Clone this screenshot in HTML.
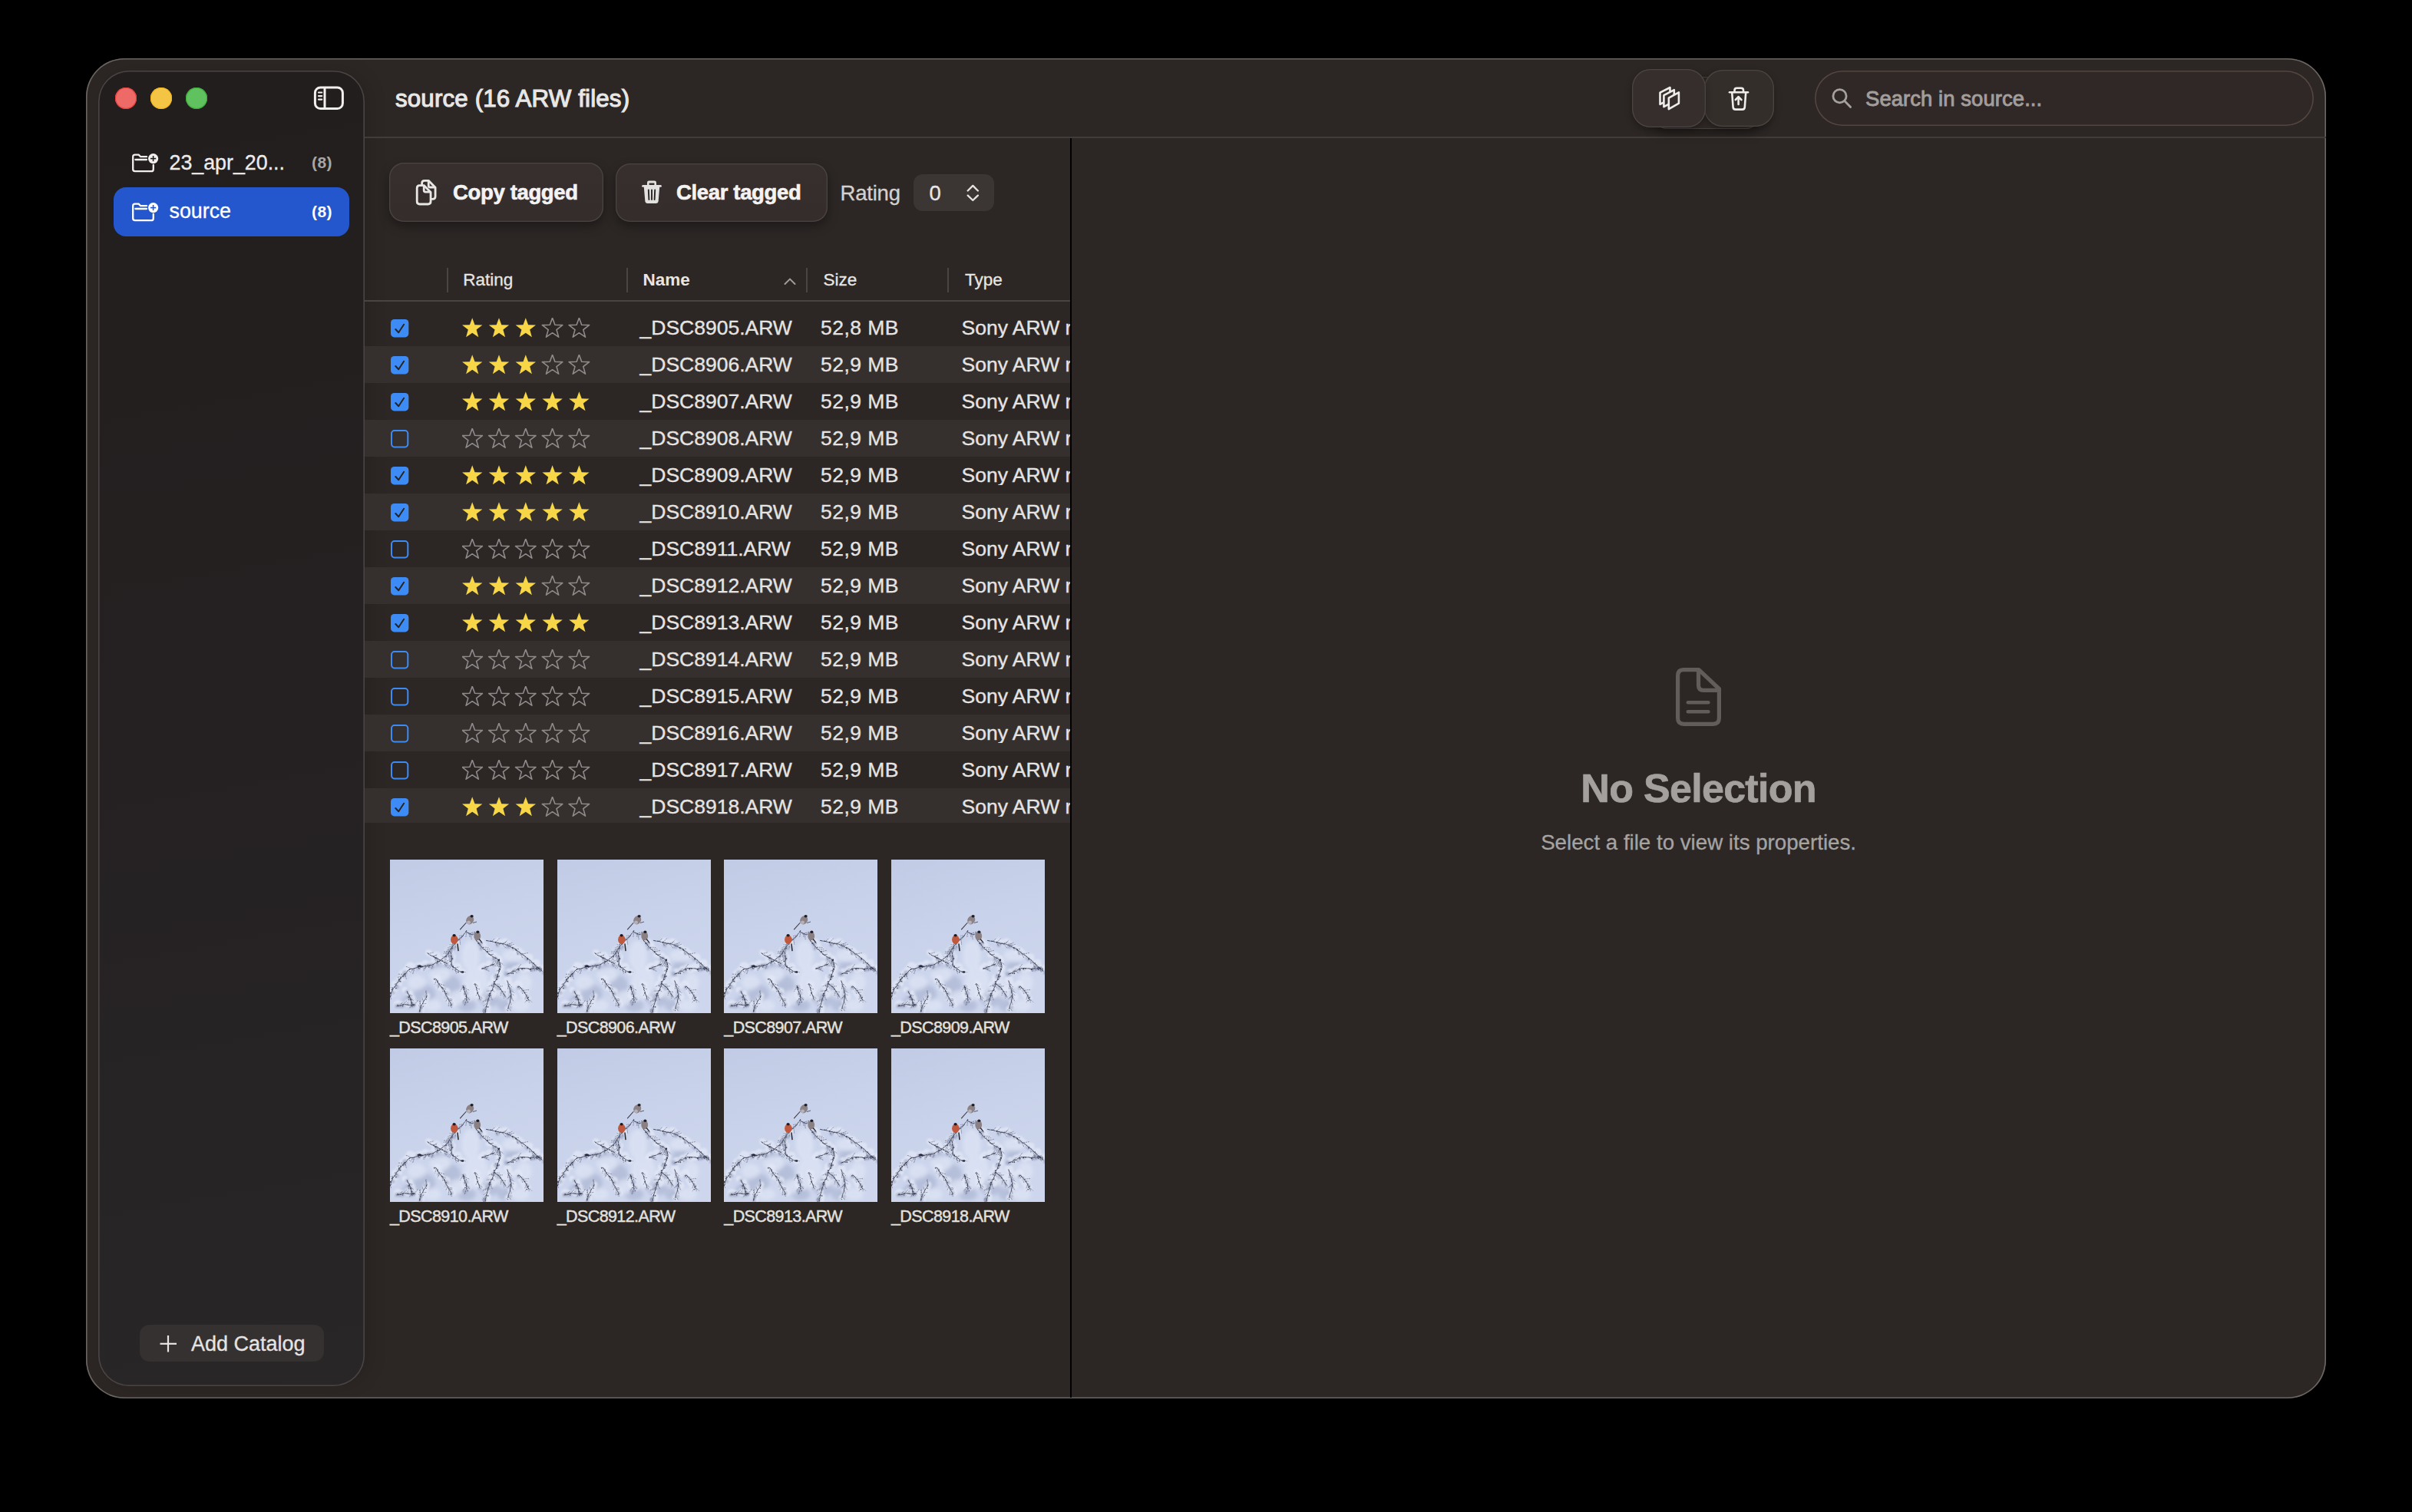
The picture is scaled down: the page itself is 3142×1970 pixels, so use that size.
<!DOCTYPE html>
<html><head><meta charset="utf-8"><title>source</title>
<style>
html,body{margin:0;padding:0;background:#000;}
body{width:3142px;height:1970px;overflow:hidden;position:relative;font-family:"Liberation Sans", sans-serif;}
.b{position:absolute;}
.t{position:absolute;white-space:nowrap;line-height:1;font-family:"Liberation Sans", sans-serif;}
</style></head><body>
<div class="b" style="left:112px;top:76px;width:2918px;height:1746px;background:#2c2725;border-radius:50px;box-shadow:inset 0 0 0 1.6px #6c6663;"></div>
<div class="b" style="left:128px;top:92px;width:347.1px;height:1714px;background:linear-gradient(170deg,#221e1d 0%,#252122 50%,#282627 100%);border-radius:40px;box-shadow:inset 0 0 0 1.6px #4b4445, 6px 0 24px rgba(0,0,0,0.12);"></div>
<div class="b" style="left:150px;top:114px;width:28px;height:28px;background:#ee6a67;border-radius:50%;box-shadow:inset 0 0 0 1.1px #e8403c;"></div>
<div class="b" style="left:196px;top:114px;width:28px;height:28px;background:#f4c545;border-radius:50%;box-shadow:inset 0 0 0 1.1px #f0b61c;"></div>
<div class="b" style="left:242px;top:114px;width:28px;height:28px;background:#60c25f;border-radius:50%;box-shadow:inset 0 0 0 1.1px #3eaa3c;"></div>
<svg class="b" style="left:405px;top:108px" width="48" height="40" viewBox="0 0 48 40"><g fill="none" stroke="#f2f0ef" stroke-width="3"><rect x="5.4" y="5.9" width="36" height="27.7" rx="7"/><line x1="18" y1="6" x2="18" y2="33.5"/></g><g stroke="#f2f0ef" stroke-width="2.2" stroke-linecap="round"><line x1="10" y1="12.5" x2="14.2" y2="12.5"/><line x1="10" y1="17.1" x2="14.2" y2="17.1"/><line x1="10" y1="21.6" x2="14.2" y2="21.6"/></g></svg>
<svg class="b" style="left:170px;top:198px" width="40" height="30" viewBox="0 0 40 30"><g fill="none" stroke="#f2f0ef" stroke-width="2.3" stroke-linejoin="round" stroke-linecap="round"><path d="M21 6.2 H13.2 L10.6 3.6 H5.8 Q3.2 3.6 3.2 6.2 V22.6 Q3.2 25.2 5.8 25.2 H27 Q29.8 25.2 29.8 22.4 V16.8"/><line x1="6.4" y1="10" x2="21" y2="10"/></g><circle cx="29.6" cy="8.6" r="6.6" fill="#f2f0ef"/><g stroke="#221e1d" stroke-width="1.6"><line x1="29.6" y1="5" x2="29.6" y2="12.2"/><line x1="26" y1="8.6" x2="33.2" y2="8.6"/></g></svg>
<div class="t" style="left:220.50px;top:198.61px;font-size:26.8px;font-weight:400;color:#eeeceb;letter-spacing:0px;-webkit-text-stroke:0.3px #eeeceb;">23_apr_20...</div>
<div class="t" style="left:406.00px;top:201.02px;font-size:21px;font-weight:700;color:#a9a6a5;letter-spacing:0.4px;">(8)</div>
<div class="b" style="left:148px;top:244px;width:307px;height:64px;background:#2457cd;border-radius:16px;"></div>
<svg class="b" style="left:170px;top:262px" width="40" height="30" viewBox="0 0 40 30"><g fill="none" stroke="#ffffff" stroke-width="2.3" stroke-linejoin="round" stroke-linecap="round"><path d="M21 6.2 H13.2 L10.6 3.6 H5.8 Q3.2 3.6 3.2 6.2 V22.6 Q3.2 25.2 5.8 25.2 H27 Q29.8 25.2 29.8 22.4 V16.8"/><line x1="6.4" y1="10" x2="21" y2="10"/></g><circle cx="29.6" cy="8.6" r="6.6" fill="#ffffff"/><g stroke="#2457cd" stroke-width="1.6"><line x1="29.6" y1="5" x2="29.6" y2="12.2"/><line x1="26" y1="8.6" x2="33.2" y2="8.6"/></g></svg>
<div class="t" style="left:220.50px;top:261.61px;font-size:26.8px;font-weight:400;color:#ffffff;letter-spacing:0px;-webkit-text-stroke:0.3px #ffffff;">source</div>
<div class="t" style="left:406.00px;top:264.52px;font-size:21px;font-weight:700;color:#ffffff;letter-spacing:0.4px;">(8)</div>
<div class="b" style="left:182px;top:1726px;width:240px;height:48px;background:#353130;border-radius:13px;"></div>
<svg class="b" style="left:206px;top:1738px" width="26" height="26" viewBox="0 0 26 26"><g stroke="#e8e5e3" stroke-width="2.2"><line x1="13" y1="2" x2="13" y2="23.5"/><line x1="2.5" y1="12.8" x2="24" y2="12.8"/></g></svg>
<div class="t" style="left:249.00px;top:1737.54px;font-size:27px;font-weight:400;color:#e6e3e1;letter-spacing:0px;-webkit-text-stroke:0.3px #e6e3e1;">Add Catalog</div>
<div class="b" style="left:475px;top:178px;width:2555px;height:2px;background:#413c3a;"></div>
<div class="t" style="left:515.00px;top:112.70px;font-size:31.3px;font-weight:400;color:#e9e7e5;letter-spacing:0.15px;-webkit-text-stroke:1.1px #e9e7e5;">source (16 ARW files)</div>
<div class="b" style="left:2152px;top:100px;width:142px;height:68px;background:#2f2927;border-radius:20px;box-shadow:0 6px 14px rgba(0,0,0,0.35), inset 0 0 0 1px #4a3f3b;"></div>
<div class="b" style="left:2220px;top:91px;width:91px;height:74px;background:#342e2b;border-radius:24px;box-shadow:0 4px 10px rgba(0,0,0,0.3), inset 0 0 0 1.3px #4c4441;"></div>
<div class="b" style="left:2126px;top:90px;width:96px;height:76px;background:#362e2c;border-radius:24px;box-shadow:0 4px 10px rgba(0,0,0,0.3), inset 0 0 0 1.3px #4c4441;"></div>
<svg class="b" style="left:2155px;top:108px" width="40" height="40" viewBox="0 0 40 40"><g fill="#362e2c" stroke="#efedeb" stroke-width="2.6" stroke-linejoin="round"><path d="M7.5 12.7 L20.5 6 V21 L7.5 27.8 Z"/><path d="M12.4 16.2 L25.8 9.2 V24 L12.4 31.2 Z"/><path d="M18.8 19.6 L31.9 12.4 V26.6 L18.8 34.1 Z"/></g></svg>
<svg class="b" style="left:2248px;top:110px" width="34" height="36" viewBox="0 0 34 36"><g fill="none" stroke="#efedeb" stroke-width="2.6" stroke-linejoin="round" stroke-linecap="round"><line x1="5" y1="10.2" x2="29" y2="10.2"/><path d="M11.5 10 V7.6 Q11.5 4.8 14.3 4.8 H20.2 Q23 4.8 23 7.6 V10"/><path d="M8.2 10.5 L9.6 29.6 Q9.8 32.6 12.8 32.6 H21.6 Q24.6 32.6 24.8 29.6 L26.2 10.5"/><line x1="16.6" y1="26" x2="16.6" y2="16.5"/><path d="M12.8 20 L16.6 16.2 L20.4 20"/></g></svg>
<div class="b" style="left:2364px;top:92px;width:650px;height:72px;background:#302826;border-radius:36px;box-shadow:inset 0 0 0 1.6px #54463f;"></div>
<svg class="b" style="left:2382px;top:111px" width="36" height="36" viewBox="0 0 36 36"><g fill="none" stroke="#a5a19f" stroke-width="2.8" stroke-linecap="round"><circle cx="14.5" cy="14.2" r="8.6"/><line x1="20.8" y1="20.6" x2="28.6" y2="28.6"/></g></svg>
<div class="t" style="left:2430.00px;top:114.72px;font-size:27.5px;font-weight:400;color:#a29e9c;letter-spacing:0.05px;-webkit-text-stroke:0.9px #a29e9c;">Search in source...</div>
<div class="b" style="left:507px;top:212px;width:279px;height:77px;background:linear-gradient(180deg,#372f2d,#342d2b);border-radius:19px;box-shadow:0 6px 14px rgba(0,0,0,0.35), inset 0 0 0 1.3px #4b4341;"></div>
<svg class="b" style="left:537px;top:229.5px" width="36" height="40" viewBox="0 0 36 40"><g fill="none" stroke="#e9e7e5" stroke-width="3" stroke-linejoin="round" transform="translate(1.5,1.2) scale(0.94)"><path d="M11.8 10.6 V8 Q11.8 4.4 15.4 4.4 H21 L30.4 14 V26.4 Q30.4 30 26.8 30 H25"/><path d="M21 4.6 V11.4 Q21 13.6 23.2 13.6 H30.2"/><path d="M8.6 11 H14.6 L24 20.6 V33.4 Q24 37 20.4 37 H8.6 Q5 37 5 33.4 V14.6 Q5 11 8.6 11 Z" fill="#352e2c"/><path d="M14.6 11.2 V18 Q14.6 20.2 16.8 20.2 H23.8"/></g></svg>
<div class="t" style="left:590.00px;top:236.72px;font-size:27.5px;font-weight:700;color:#f5f3f2;letter-spacing:-0.35px;-webkit-text-stroke:0.6px #f5f3f2;">Copy tagged</div>
<div class="b" style="left:802px;top:213px;width:276px;height:75.5px;background:linear-gradient(180deg,#372f2d,#342d2b);border-radius:19px;box-shadow:0 6px 14px rgba(0,0,0,0.35), inset 0 0 0 1.3px #4b4341;"></div>
<svg class="b" style="left:832px;top:232px" width="34" height="36" viewBox="0 0 34 36"><path fill="#e3e1e0" d="M13.4 3.6 H20.6 Q23 3.6 23 6 V9 H28.4 Q30 9.2 30 10.4 Q30 11.6 28.4 11.8 H27.2 L25.6 30.6 Q25.3 33 22.8 33 H11.2 Q8.7 33 8.4 30.6 L6.8 11.8 H5.6 Q4 11.6 4 10.4 Q4 9.2 5.6 9 H11 V6 Q11 3.6 13.4 3.6 Z M13.6 6.4 V9 H20.4 V6.4 Z"/><g stroke="#2a2422" stroke-width="1.9" stroke-linecap="round"><line x1="12.8" y1="15.5" x2="13.4" y2="28"/><line x1="17" y1="15.5" x2="17" y2="28"/><line x1="21.2" y1="15.5" x2="20.6" y2="28"/></g></svg>
<div class="t" style="left:881.00px;top:236.72px;font-size:27.5px;font-weight:700;color:#f5f3f2;letter-spacing:-0.35px;-webkit-text-stroke:0.6px #f5f3f2;">Clear tagged</div>
<div class="t" style="left:1094.50px;top:238.22px;font-size:27.5px;font-weight:400;color:#d4d0ce;letter-spacing:-0.2px;-webkit-text-stroke:0.3px #d4d0ce;">Rating</div>
<div class="b" style="left:1190px;top:227px;width:105px;height:48px;background:#3b3633;border-radius:12px;"></div>
<div class="t" style="left:1210.50px;top:238.22px;font-size:27.5px;font-weight:400;color:#e9e7e5;letter-spacing:0px;-webkit-text-stroke:0.3px #e9e7e5;">0</div>
<svg class="b" style="left:1254px;top:236px" width="26" height="32" viewBox="0 0 26 32"><g fill="none" stroke="#e6e4e2" stroke-width="2.3" stroke-linecap="round" stroke-linejoin="round"><path d="M6.7 12.5 L13.3 5.9 L19.9 12.5"/><path d="M6.7 18.6 L13.3 25 L19.9 18.6"/></g></svg>
<div class="b" style="left:582px;top:349px;width:2px;height:32px;background:#4a4543;"></div>
<div class="b" style="left:816px;top:349px;width:2px;height:32px;background:#4a4543;"></div>
<div class="b" style="left:1050px;top:349px;width:2px;height:32px;background:#4a4543;"></div>
<div class="b" style="left:1234px;top:349px;width:2px;height:32px;background:#4a4543;"></div>
<div class="t" style="left:603.30px;top:354.25px;font-size:22.5px;font-weight:400;color:#e8e5e3;letter-spacing:0px;-webkit-text-stroke:0.3px #e8e5e3;">Rating</div>
<div class="t" style="left:837.60px;top:354.25px;font-size:22.5px;font-weight:700;color:#e8e5e3;letter-spacing:0px;">Name</div>
<svg class="b" style="left:1018px;top:355px" width="22" height="20" viewBox="0 0 22 20"><path d="M4.5 15 L11 8.6 L17.5 15" fill="none" stroke="#a19d9b" stroke-width="2" stroke-linecap="round"/></svg>
<div class="t" style="left:1072.50px;top:354.25px;font-size:22.5px;font-weight:400;color:#e8e5e3;letter-spacing:0px;-webkit-text-stroke:0.3px #e8e5e3;">Size</div>
<div class="t" style="left:1257.00px;top:354.25px;font-size:22.5px;font-weight:400;color:#e8e5e3;letter-spacing:0px;-webkit-text-stroke:0.3px #e8e5e3;">Type</div>
<div class="b" style="left:475px;top:391px;width:919px;height:2px;background:#4a4543;"></div>
<svg class="b" style="left:509px;top:415.50px" width="24" height="24" viewBox="0 0 24 24"><rect x="0" y="0" width="23.3" height="23.4" rx="4.6" fill="#3d8bf5"/><path d="M6.3 13 L10.2 17.2 L17.1 6.8" fill="none" stroke="#2a2320" stroke-width="2" stroke-linecap="round" stroke-linejoin="round"/></svg>
<svg class="b" style="left:601.5px;top:414.30px" width="170" height="26" viewBox="0 0 170 26"><path transform="translate(0.00,0)" d="M13.2 0.2 L16.5 9.3 L26.4 9.6 L18.6 15.6 L21.3 25.2 L13.2 19.7 L5.1 25.2 L7.8 15.6 L0 9.6 L9.9 9.3 Z" fill="#f7d647"/><path transform="translate(34.80,0)" d="M13.2 0.2 L16.5 9.3 L26.4 9.6 L18.6 15.6 L21.3 25.2 L13.2 19.7 L5.1 25.2 L7.8 15.6 L0 9.6 L9.9 9.3 Z" fill="#f7d647"/><path transform="translate(69.60,0)" d="M13.2 0.2 L16.5 9.3 L26.4 9.6 L18.6 15.6 L21.3 25.2 L13.2 19.7 L5.1 25.2 L7.8 15.6 L0 9.6 L9.9 9.3 Z" fill="#f7d647"/><path transform="translate(104.40,0)" d="M13.2 0.2 L16.5 9.3 L26.4 9.6 L18.6 15.6 L21.3 25.2 L13.2 19.7 L5.1 25.2 L7.8 15.6 L0 9.6 L9.9 9.3 Z" fill="none" stroke="#8f8b8c" stroke-width="1.6" stroke-linejoin="round"/><path transform="translate(139.20,0)" d="M13.2 0.2 L16.5 9.3 L26.4 9.6 L18.6 15.6 L21.3 25.2 L13.2 19.7 L5.1 25.2 L7.8 15.6 L0 9.6 L9.9 9.3 Z" fill="none" stroke="#8f8b8c" stroke-width="1.6" stroke-linejoin="round"/></svg>
<div class="t" style="left:833.50px;top:413.97px;font-size:26.5px;font-weight:400;color:#e6e3e1;letter-spacing:0px;-webkit-text-stroke:0.35px #e6e3e1;">_DSC8905.ARW</div>
<div class="t" style="left:1069.00px;top:413.97px;font-size:26.5px;font-weight:400;color:#e6e3e1;letter-spacing:0.45px;-webkit-text-stroke:0.35px #e6e3e1;">52,8 MB</div>
<div class="t" style="left:1252.5px;top:413.97px;font-size:26.5px;color:#e6e3e1;width:141px;overflow:hidden;-webkit-text-stroke:0.35px #e6e3e1;">Sony ARW raw image</div>
<div class="b" style="left:475px;top:451.20px;width:919px;height:48.00px;background:#35302d;"></div>
<svg class="b" style="left:509px;top:463.50px" width="24" height="24" viewBox="0 0 24 24"><rect x="0" y="0" width="23.3" height="23.4" rx="4.6" fill="#3d8bf5"/><path d="M6.3 13 L10.2 17.2 L17.1 6.8" fill="none" stroke="#2a2320" stroke-width="2" stroke-linecap="round" stroke-linejoin="round"/></svg>
<svg class="b" style="left:601.5px;top:462.30px" width="170" height="26" viewBox="0 0 170 26"><path transform="translate(0.00,0)" d="M13.2 0.2 L16.5 9.3 L26.4 9.6 L18.6 15.6 L21.3 25.2 L13.2 19.7 L5.1 25.2 L7.8 15.6 L0 9.6 L9.9 9.3 Z" fill="#f7d647"/><path transform="translate(34.80,0)" d="M13.2 0.2 L16.5 9.3 L26.4 9.6 L18.6 15.6 L21.3 25.2 L13.2 19.7 L5.1 25.2 L7.8 15.6 L0 9.6 L9.9 9.3 Z" fill="#f7d647"/><path transform="translate(69.60,0)" d="M13.2 0.2 L16.5 9.3 L26.4 9.6 L18.6 15.6 L21.3 25.2 L13.2 19.7 L5.1 25.2 L7.8 15.6 L0 9.6 L9.9 9.3 Z" fill="#f7d647"/><path transform="translate(104.40,0)" d="M13.2 0.2 L16.5 9.3 L26.4 9.6 L18.6 15.6 L21.3 25.2 L13.2 19.7 L5.1 25.2 L7.8 15.6 L0 9.6 L9.9 9.3 Z" fill="none" stroke="#8f8b8c" stroke-width="1.6" stroke-linejoin="round"/><path transform="translate(139.20,0)" d="M13.2 0.2 L16.5 9.3 L26.4 9.6 L18.6 15.6 L21.3 25.2 L13.2 19.7 L5.1 25.2 L7.8 15.6 L0 9.6 L9.9 9.3 Z" fill="none" stroke="#8f8b8c" stroke-width="1.6" stroke-linejoin="round"/></svg>
<div class="t" style="left:833.50px;top:461.97px;font-size:26.5px;font-weight:400;color:#e6e3e1;letter-spacing:0px;-webkit-text-stroke:0.35px #e6e3e1;">_DSC8906.ARW</div>
<div class="t" style="left:1069.00px;top:461.97px;font-size:26.5px;font-weight:400;color:#e6e3e1;letter-spacing:0.45px;-webkit-text-stroke:0.35px #e6e3e1;">52,9 MB</div>
<div class="t" style="left:1252.5px;top:461.97px;font-size:26.5px;color:#e6e3e1;width:141px;overflow:hidden;-webkit-text-stroke:0.35px #e6e3e1;">Sony ARW raw image</div>
<svg class="b" style="left:509px;top:511.50px" width="24" height="24" viewBox="0 0 24 24"><rect x="0" y="0" width="23.3" height="23.4" rx="4.6" fill="#3d8bf5"/><path d="M6.3 13 L10.2 17.2 L17.1 6.8" fill="none" stroke="#2a2320" stroke-width="2" stroke-linecap="round" stroke-linejoin="round"/></svg>
<svg class="b" style="left:601.5px;top:510.30px" width="170" height="26" viewBox="0 0 170 26"><path transform="translate(0.00,0)" d="M13.2 0.2 L16.5 9.3 L26.4 9.6 L18.6 15.6 L21.3 25.2 L13.2 19.7 L5.1 25.2 L7.8 15.6 L0 9.6 L9.9 9.3 Z" fill="#f7d647"/><path transform="translate(34.80,0)" d="M13.2 0.2 L16.5 9.3 L26.4 9.6 L18.6 15.6 L21.3 25.2 L13.2 19.7 L5.1 25.2 L7.8 15.6 L0 9.6 L9.9 9.3 Z" fill="#f7d647"/><path transform="translate(69.60,0)" d="M13.2 0.2 L16.5 9.3 L26.4 9.6 L18.6 15.6 L21.3 25.2 L13.2 19.7 L5.1 25.2 L7.8 15.6 L0 9.6 L9.9 9.3 Z" fill="#f7d647"/><path transform="translate(104.40,0)" d="M13.2 0.2 L16.5 9.3 L26.4 9.6 L18.6 15.6 L21.3 25.2 L13.2 19.7 L5.1 25.2 L7.8 15.6 L0 9.6 L9.9 9.3 Z" fill="#f7d647"/><path transform="translate(139.20,0)" d="M13.2 0.2 L16.5 9.3 L26.4 9.6 L18.6 15.6 L21.3 25.2 L13.2 19.7 L5.1 25.2 L7.8 15.6 L0 9.6 L9.9 9.3 Z" fill="#f7d647"/></svg>
<div class="t" style="left:833.50px;top:509.97px;font-size:26.5px;font-weight:400;color:#e6e3e1;letter-spacing:0px;-webkit-text-stroke:0.35px #e6e3e1;">_DSC8907.ARW</div>
<div class="t" style="left:1069.00px;top:509.97px;font-size:26.5px;font-weight:400;color:#e6e3e1;letter-spacing:0.45px;-webkit-text-stroke:0.35px #e6e3e1;">52,9 MB</div>
<div class="t" style="left:1252.5px;top:509.97px;font-size:26.5px;color:#e6e3e1;width:141px;overflow:hidden;-webkit-text-stroke:0.35px #e6e3e1;">Sony ARW raw image</div>
<div class="b" style="left:475px;top:547.20px;width:919px;height:48.00px;background:#35302d;"></div>
<svg class="b" style="left:509px;top:559.50px" width="24" height="24" viewBox="0 0 24 24"><rect x="1" y="1" width="21.3" height="21.4" rx="3.8" fill="none" stroke="#3d8bf5" stroke-width="2"/></svg>
<svg class="b" style="left:601.5px;top:558.30px" width="170" height="26" viewBox="0 0 170 26"><path transform="translate(0.00,0)" d="M13.2 0.2 L16.5 9.3 L26.4 9.6 L18.6 15.6 L21.3 25.2 L13.2 19.7 L5.1 25.2 L7.8 15.6 L0 9.6 L9.9 9.3 Z" fill="none" stroke="#8f8b8c" stroke-width="1.6" stroke-linejoin="round"/><path transform="translate(34.80,0)" d="M13.2 0.2 L16.5 9.3 L26.4 9.6 L18.6 15.6 L21.3 25.2 L13.2 19.7 L5.1 25.2 L7.8 15.6 L0 9.6 L9.9 9.3 Z" fill="none" stroke="#8f8b8c" stroke-width="1.6" stroke-linejoin="round"/><path transform="translate(69.60,0)" d="M13.2 0.2 L16.5 9.3 L26.4 9.6 L18.6 15.6 L21.3 25.2 L13.2 19.7 L5.1 25.2 L7.8 15.6 L0 9.6 L9.9 9.3 Z" fill="none" stroke="#8f8b8c" stroke-width="1.6" stroke-linejoin="round"/><path transform="translate(104.40,0)" d="M13.2 0.2 L16.5 9.3 L26.4 9.6 L18.6 15.6 L21.3 25.2 L13.2 19.7 L5.1 25.2 L7.8 15.6 L0 9.6 L9.9 9.3 Z" fill="none" stroke="#8f8b8c" stroke-width="1.6" stroke-linejoin="round"/><path transform="translate(139.20,0)" d="M13.2 0.2 L16.5 9.3 L26.4 9.6 L18.6 15.6 L21.3 25.2 L13.2 19.7 L5.1 25.2 L7.8 15.6 L0 9.6 L9.9 9.3 Z" fill="none" stroke="#8f8b8c" stroke-width="1.6" stroke-linejoin="round"/></svg>
<div class="t" style="left:833.50px;top:557.97px;font-size:26.5px;font-weight:400;color:#e6e3e1;letter-spacing:0px;-webkit-text-stroke:0.35px #e6e3e1;">_DSC8908.ARW</div>
<div class="t" style="left:1069.00px;top:557.97px;font-size:26.5px;font-weight:400;color:#e6e3e1;letter-spacing:0.45px;-webkit-text-stroke:0.35px #e6e3e1;">52,9 MB</div>
<div class="t" style="left:1252.5px;top:557.97px;font-size:26.5px;color:#e6e3e1;width:141px;overflow:hidden;-webkit-text-stroke:0.35px #e6e3e1;">Sony ARW raw image</div>
<svg class="b" style="left:509px;top:607.50px" width="24" height="24" viewBox="0 0 24 24"><rect x="0" y="0" width="23.3" height="23.4" rx="4.6" fill="#3d8bf5"/><path d="M6.3 13 L10.2 17.2 L17.1 6.8" fill="none" stroke="#2a2320" stroke-width="2" stroke-linecap="round" stroke-linejoin="round"/></svg>
<svg class="b" style="left:601.5px;top:606.30px" width="170" height="26" viewBox="0 0 170 26"><path transform="translate(0.00,0)" d="M13.2 0.2 L16.5 9.3 L26.4 9.6 L18.6 15.6 L21.3 25.2 L13.2 19.7 L5.1 25.2 L7.8 15.6 L0 9.6 L9.9 9.3 Z" fill="#f7d647"/><path transform="translate(34.80,0)" d="M13.2 0.2 L16.5 9.3 L26.4 9.6 L18.6 15.6 L21.3 25.2 L13.2 19.7 L5.1 25.2 L7.8 15.6 L0 9.6 L9.9 9.3 Z" fill="#f7d647"/><path transform="translate(69.60,0)" d="M13.2 0.2 L16.5 9.3 L26.4 9.6 L18.6 15.6 L21.3 25.2 L13.2 19.7 L5.1 25.2 L7.8 15.6 L0 9.6 L9.9 9.3 Z" fill="#f7d647"/><path transform="translate(104.40,0)" d="M13.2 0.2 L16.5 9.3 L26.4 9.6 L18.6 15.6 L21.3 25.2 L13.2 19.7 L5.1 25.2 L7.8 15.6 L0 9.6 L9.9 9.3 Z" fill="#f7d647"/><path transform="translate(139.20,0)" d="M13.2 0.2 L16.5 9.3 L26.4 9.6 L18.6 15.6 L21.3 25.2 L13.2 19.7 L5.1 25.2 L7.8 15.6 L0 9.6 L9.9 9.3 Z" fill="#f7d647"/></svg>
<div class="t" style="left:833.50px;top:605.97px;font-size:26.5px;font-weight:400;color:#e6e3e1;letter-spacing:0px;-webkit-text-stroke:0.35px #e6e3e1;">_DSC8909.ARW</div>
<div class="t" style="left:1069.00px;top:605.97px;font-size:26.5px;font-weight:400;color:#e6e3e1;letter-spacing:0.45px;-webkit-text-stroke:0.35px #e6e3e1;">52,9 MB</div>
<div class="t" style="left:1252.5px;top:605.97px;font-size:26.5px;color:#e6e3e1;width:141px;overflow:hidden;-webkit-text-stroke:0.35px #e6e3e1;">Sony ARW raw image</div>
<div class="b" style="left:475px;top:643.20px;width:919px;height:48.00px;background:#35302d;"></div>
<svg class="b" style="left:509px;top:655.50px" width="24" height="24" viewBox="0 0 24 24"><rect x="0" y="0" width="23.3" height="23.4" rx="4.6" fill="#3d8bf5"/><path d="M6.3 13 L10.2 17.2 L17.1 6.8" fill="none" stroke="#2a2320" stroke-width="2" stroke-linecap="round" stroke-linejoin="round"/></svg>
<svg class="b" style="left:601.5px;top:654.30px" width="170" height="26" viewBox="0 0 170 26"><path transform="translate(0.00,0)" d="M13.2 0.2 L16.5 9.3 L26.4 9.6 L18.6 15.6 L21.3 25.2 L13.2 19.7 L5.1 25.2 L7.8 15.6 L0 9.6 L9.9 9.3 Z" fill="#f7d647"/><path transform="translate(34.80,0)" d="M13.2 0.2 L16.5 9.3 L26.4 9.6 L18.6 15.6 L21.3 25.2 L13.2 19.7 L5.1 25.2 L7.8 15.6 L0 9.6 L9.9 9.3 Z" fill="#f7d647"/><path transform="translate(69.60,0)" d="M13.2 0.2 L16.5 9.3 L26.4 9.6 L18.6 15.6 L21.3 25.2 L13.2 19.7 L5.1 25.2 L7.8 15.6 L0 9.6 L9.9 9.3 Z" fill="#f7d647"/><path transform="translate(104.40,0)" d="M13.2 0.2 L16.5 9.3 L26.4 9.6 L18.6 15.6 L21.3 25.2 L13.2 19.7 L5.1 25.2 L7.8 15.6 L0 9.6 L9.9 9.3 Z" fill="#f7d647"/><path transform="translate(139.20,0)" d="M13.2 0.2 L16.5 9.3 L26.4 9.6 L18.6 15.6 L21.3 25.2 L13.2 19.7 L5.1 25.2 L7.8 15.6 L0 9.6 L9.9 9.3 Z" fill="#f7d647"/></svg>
<div class="t" style="left:833.50px;top:653.97px;font-size:26.5px;font-weight:400;color:#e6e3e1;letter-spacing:0px;-webkit-text-stroke:0.35px #e6e3e1;">_DSC8910.ARW</div>
<div class="t" style="left:1069.00px;top:653.97px;font-size:26.5px;font-weight:400;color:#e6e3e1;letter-spacing:0.45px;-webkit-text-stroke:0.35px #e6e3e1;">52,9 MB</div>
<div class="t" style="left:1252.5px;top:653.97px;font-size:26.5px;color:#e6e3e1;width:141px;overflow:hidden;-webkit-text-stroke:0.35px #e6e3e1;">Sony ARW raw image</div>
<svg class="b" style="left:509px;top:703.50px" width="24" height="24" viewBox="0 0 24 24"><rect x="1" y="1" width="21.3" height="21.4" rx="3.8" fill="none" stroke="#3d8bf5" stroke-width="2"/></svg>
<svg class="b" style="left:601.5px;top:702.30px" width="170" height="26" viewBox="0 0 170 26"><path transform="translate(0.00,0)" d="M13.2 0.2 L16.5 9.3 L26.4 9.6 L18.6 15.6 L21.3 25.2 L13.2 19.7 L5.1 25.2 L7.8 15.6 L0 9.6 L9.9 9.3 Z" fill="none" stroke="#8f8b8c" stroke-width="1.6" stroke-linejoin="round"/><path transform="translate(34.80,0)" d="M13.2 0.2 L16.5 9.3 L26.4 9.6 L18.6 15.6 L21.3 25.2 L13.2 19.7 L5.1 25.2 L7.8 15.6 L0 9.6 L9.9 9.3 Z" fill="none" stroke="#8f8b8c" stroke-width="1.6" stroke-linejoin="round"/><path transform="translate(69.60,0)" d="M13.2 0.2 L16.5 9.3 L26.4 9.6 L18.6 15.6 L21.3 25.2 L13.2 19.7 L5.1 25.2 L7.8 15.6 L0 9.6 L9.9 9.3 Z" fill="none" stroke="#8f8b8c" stroke-width="1.6" stroke-linejoin="round"/><path transform="translate(104.40,0)" d="M13.2 0.2 L16.5 9.3 L26.4 9.6 L18.6 15.6 L21.3 25.2 L13.2 19.7 L5.1 25.2 L7.8 15.6 L0 9.6 L9.9 9.3 Z" fill="none" stroke="#8f8b8c" stroke-width="1.6" stroke-linejoin="round"/><path transform="translate(139.20,0)" d="M13.2 0.2 L16.5 9.3 L26.4 9.6 L18.6 15.6 L21.3 25.2 L13.2 19.7 L5.1 25.2 L7.8 15.6 L0 9.6 L9.9 9.3 Z" fill="none" stroke="#8f8b8c" stroke-width="1.6" stroke-linejoin="round"/></svg>
<div class="t" style="left:833.50px;top:701.97px;font-size:26.5px;font-weight:400;color:#e6e3e1;letter-spacing:0px;-webkit-text-stroke:0.35px #e6e3e1;">_DSC8911.ARW</div>
<div class="t" style="left:1069.00px;top:701.97px;font-size:26.5px;font-weight:400;color:#e6e3e1;letter-spacing:0.45px;-webkit-text-stroke:0.35px #e6e3e1;">52,9 MB</div>
<div class="t" style="left:1252.5px;top:701.97px;font-size:26.5px;color:#e6e3e1;width:141px;overflow:hidden;-webkit-text-stroke:0.35px #e6e3e1;">Sony ARW raw image</div>
<div class="b" style="left:475px;top:739.20px;width:919px;height:48.00px;background:#35302d;"></div>
<svg class="b" style="left:509px;top:751.50px" width="24" height="24" viewBox="0 0 24 24"><rect x="0" y="0" width="23.3" height="23.4" rx="4.6" fill="#3d8bf5"/><path d="M6.3 13 L10.2 17.2 L17.1 6.8" fill="none" stroke="#2a2320" stroke-width="2" stroke-linecap="round" stroke-linejoin="round"/></svg>
<svg class="b" style="left:601.5px;top:750.30px" width="170" height="26" viewBox="0 0 170 26"><path transform="translate(0.00,0)" d="M13.2 0.2 L16.5 9.3 L26.4 9.6 L18.6 15.6 L21.3 25.2 L13.2 19.7 L5.1 25.2 L7.8 15.6 L0 9.6 L9.9 9.3 Z" fill="#f7d647"/><path transform="translate(34.80,0)" d="M13.2 0.2 L16.5 9.3 L26.4 9.6 L18.6 15.6 L21.3 25.2 L13.2 19.7 L5.1 25.2 L7.8 15.6 L0 9.6 L9.9 9.3 Z" fill="#f7d647"/><path transform="translate(69.60,0)" d="M13.2 0.2 L16.5 9.3 L26.4 9.6 L18.6 15.6 L21.3 25.2 L13.2 19.7 L5.1 25.2 L7.8 15.6 L0 9.6 L9.9 9.3 Z" fill="#f7d647"/><path transform="translate(104.40,0)" d="M13.2 0.2 L16.5 9.3 L26.4 9.6 L18.6 15.6 L21.3 25.2 L13.2 19.7 L5.1 25.2 L7.8 15.6 L0 9.6 L9.9 9.3 Z" fill="none" stroke="#8f8b8c" stroke-width="1.6" stroke-linejoin="round"/><path transform="translate(139.20,0)" d="M13.2 0.2 L16.5 9.3 L26.4 9.6 L18.6 15.6 L21.3 25.2 L13.2 19.7 L5.1 25.2 L7.8 15.6 L0 9.6 L9.9 9.3 Z" fill="none" stroke="#8f8b8c" stroke-width="1.6" stroke-linejoin="round"/></svg>
<div class="t" style="left:833.50px;top:749.97px;font-size:26.5px;font-weight:400;color:#e6e3e1;letter-spacing:0px;-webkit-text-stroke:0.35px #e6e3e1;">_DSC8912.ARW</div>
<div class="t" style="left:1069.00px;top:749.97px;font-size:26.5px;font-weight:400;color:#e6e3e1;letter-spacing:0.45px;-webkit-text-stroke:0.35px #e6e3e1;">52,9 MB</div>
<div class="t" style="left:1252.5px;top:749.97px;font-size:26.5px;color:#e6e3e1;width:141px;overflow:hidden;-webkit-text-stroke:0.35px #e6e3e1;">Sony ARW raw image</div>
<svg class="b" style="left:509px;top:799.50px" width="24" height="24" viewBox="0 0 24 24"><rect x="0" y="0" width="23.3" height="23.4" rx="4.6" fill="#3d8bf5"/><path d="M6.3 13 L10.2 17.2 L17.1 6.8" fill="none" stroke="#2a2320" stroke-width="2" stroke-linecap="round" stroke-linejoin="round"/></svg>
<svg class="b" style="left:601.5px;top:798.30px" width="170" height="26" viewBox="0 0 170 26"><path transform="translate(0.00,0)" d="M13.2 0.2 L16.5 9.3 L26.4 9.6 L18.6 15.6 L21.3 25.2 L13.2 19.7 L5.1 25.2 L7.8 15.6 L0 9.6 L9.9 9.3 Z" fill="#f7d647"/><path transform="translate(34.80,0)" d="M13.2 0.2 L16.5 9.3 L26.4 9.6 L18.6 15.6 L21.3 25.2 L13.2 19.7 L5.1 25.2 L7.8 15.6 L0 9.6 L9.9 9.3 Z" fill="#f7d647"/><path transform="translate(69.60,0)" d="M13.2 0.2 L16.5 9.3 L26.4 9.6 L18.6 15.6 L21.3 25.2 L13.2 19.7 L5.1 25.2 L7.8 15.6 L0 9.6 L9.9 9.3 Z" fill="#f7d647"/><path transform="translate(104.40,0)" d="M13.2 0.2 L16.5 9.3 L26.4 9.6 L18.6 15.6 L21.3 25.2 L13.2 19.7 L5.1 25.2 L7.8 15.6 L0 9.6 L9.9 9.3 Z" fill="#f7d647"/><path transform="translate(139.20,0)" d="M13.2 0.2 L16.5 9.3 L26.4 9.6 L18.6 15.6 L21.3 25.2 L13.2 19.7 L5.1 25.2 L7.8 15.6 L0 9.6 L9.9 9.3 Z" fill="#f7d647"/></svg>
<div class="t" style="left:833.50px;top:797.97px;font-size:26.5px;font-weight:400;color:#e6e3e1;letter-spacing:0px;-webkit-text-stroke:0.35px #e6e3e1;">_DSC8913.ARW</div>
<div class="t" style="left:1069.00px;top:797.97px;font-size:26.5px;font-weight:400;color:#e6e3e1;letter-spacing:0.45px;-webkit-text-stroke:0.35px #e6e3e1;">52,9 MB</div>
<div class="t" style="left:1252.5px;top:797.97px;font-size:26.5px;color:#e6e3e1;width:141px;overflow:hidden;-webkit-text-stroke:0.35px #e6e3e1;">Sony ARW raw image</div>
<div class="b" style="left:475px;top:835.20px;width:919px;height:48.00px;background:#35302d;"></div>
<svg class="b" style="left:509px;top:847.50px" width="24" height="24" viewBox="0 0 24 24"><rect x="1" y="1" width="21.3" height="21.4" rx="3.8" fill="none" stroke="#3d8bf5" stroke-width="2"/></svg>
<svg class="b" style="left:601.5px;top:846.30px" width="170" height="26" viewBox="0 0 170 26"><path transform="translate(0.00,0)" d="M13.2 0.2 L16.5 9.3 L26.4 9.6 L18.6 15.6 L21.3 25.2 L13.2 19.7 L5.1 25.2 L7.8 15.6 L0 9.6 L9.9 9.3 Z" fill="none" stroke="#8f8b8c" stroke-width="1.6" stroke-linejoin="round"/><path transform="translate(34.80,0)" d="M13.2 0.2 L16.5 9.3 L26.4 9.6 L18.6 15.6 L21.3 25.2 L13.2 19.7 L5.1 25.2 L7.8 15.6 L0 9.6 L9.9 9.3 Z" fill="none" stroke="#8f8b8c" stroke-width="1.6" stroke-linejoin="round"/><path transform="translate(69.60,0)" d="M13.2 0.2 L16.5 9.3 L26.4 9.6 L18.6 15.6 L21.3 25.2 L13.2 19.7 L5.1 25.2 L7.8 15.6 L0 9.6 L9.9 9.3 Z" fill="none" stroke="#8f8b8c" stroke-width="1.6" stroke-linejoin="round"/><path transform="translate(104.40,0)" d="M13.2 0.2 L16.5 9.3 L26.4 9.6 L18.6 15.6 L21.3 25.2 L13.2 19.7 L5.1 25.2 L7.8 15.6 L0 9.6 L9.9 9.3 Z" fill="none" stroke="#8f8b8c" stroke-width="1.6" stroke-linejoin="round"/><path transform="translate(139.20,0)" d="M13.2 0.2 L16.5 9.3 L26.4 9.6 L18.6 15.6 L21.3 25.2 L13.2 19.7 L5.1 25.2 L7.8 15.6 L0 9.6 L9.9 9.3 Z" fill="none" stroke="#8f8b8c" stroke-width="1.6" stroke-linejoin="round"/></svg>
<div class="t" style="left:833.50px;top:845.97px;font-size:26.5px;font-weight:400;color:#e6e3e1;letter-spacing:0px;-webkit-text-stroke:0.35px #e6e3e1;">_DSC8914.ARW</div>
<div class="t" style="left:1069.00px;top:845.97px;font-size:26.5px;font-weight:400;color:#e6e3e1;letter-spacing:0.45px;-webkit-text-stroke:0.35px #e6e3e1;">52,9 MB</div>
<div class="t" style="left:1252.5px;top:845.97px;font-size:26.5px;color:#e6e3e1;width:141px;overflow:hidden;-webkit-text-stroke:0.35px #e6e3e1;">Sony ARW raw image</div>
<svg class="b" style="left:509px;top:895.50px" width="24" height="24" viewBox="0 0 24 24"><rect x="1" y="1" width="21.3" height="21.4" rx="3.8" fill="none" stroke="#3d8bf5" stroke-width="2"/></svg>
<svg class="b" style="left:601.5px;top:894.30px" width="170" height="26" viewBox="0 0 170 26"><path transform="translate(0.00,0)" d="M13.2 0.2 L16.5 9.3 L26.4 9.6 L18.6 15.6 L21.3 25.2 L13.2 19.7 L5.1 25.2 L7.8 15.6 L0 9.6 L9.9 9.3 Z" fill="none" stroke="#8f8b8c" stroke-width="1.6" stroke-linejoin="round"/><path transform="translate(34.80,0)" d="M13.2 0.2 L16.5 9.3 L26.4 9.6 L18.6 15.6 L21.3 25.2 L13.2 19.7 L5.1 25.2 L7.8 15.6 L0 9.6 L9.9 9.3 Z" fill="none" stroke="#8f8b8c" stroke-width="1.6" stroke-linejoin="round"/><path transform="translate(69.60,0)" d="M13.2 0.2 L16.5 9.3 L26.4 9.6 L18.6 15.6 L21.3 25.2 L13.2 19.7 L5.1 25.2 L7.8 15.6 L0 9.6 L9.9 9.3 Z" fill="none" stroke="#8f8b8c" stroke-width="1.6" stroke-linejoin="round"/><path transform="translate(104.40,0)" d="M13.2 0.2 L16.5 9.3 L26.4 9.6 L18.6 15.6 L21.3 25.2 L13.2 19.7 L5.1 25.2 L7.8 15.6 L0 9.6 L9.9 9.3 Z" fill="none" stroke="#8f8b8c" stroke-width="1.6" stroke-linejoin="round"/><path transform="translate(139.20,0)" d="M13.2 0.2 L16.5 9.3 L26.4 9.6 L18.6 15.6 L21.3 25.2 L13.2 19.7 L5.1 25.2 L7.8 15.6 L0 9.6 L9.9 9.3 Z" fill="none" stroke="#8f8b8c" stroke-width="1.6" stroke-linejoin="round"/></svg>
<div class="t" style="left:833.50px;top:893.97px;font-size:26.5px;font-weight:400;color:#e6e3e1;letter-spacing:0px;-webkit-text-stroke:0.35px #e6e3e1;">_DSC8915.ARW</div>
<div class="t" style="left:1069.00px;top:893.97px;font-size:26.5px;font-weight:400;color:#e6e3e1;letter-spacing:0.45px;-webkit-text-stroke:0.35px #e6e3e1;">52,9 MB</div>
<div class="t" style="left:1252.5px;top:893.97px;font-size:26.5px;color:#e6e3e1;width:141px;overflow:hidden;-webkit-text-stroke:0.35px #e6e3e1;">Sony ARW raw image</div>
<div class="b" style="left:475px;top:931.20px;width:919px;height:48.00px;background:#35302d;"></div>
<svg class="b" style="left:509px;top:943.50px" width="24" height="24" viewBox="0 0 24 24"><rect x="1" y="1" width="21.3" height="21.4" rx="3.8" fill="none" stroke="#3d8bf5" stroke-width="2"/></svg>
<svg class="b" style="left:601.5px;top:942.30px" width="170" height="26" viewBox="0 0 170 26"><path transform="translate(0.00,0)" d="M13.2 0.2 L16.5 9.3 L26.4 9.6 L18.6 15.6 L21.3 25.2 L13.2 19.7 L5.1 25.2 L7.8 15.6 L0 9.6 L9.9 9.3 Z" fill="none" stroke="#8f8b8c" stroke-width="1.6" stroke-linejoin="round"/><path transform="translate(34.80,0)" d="M13.2 0.2 L16.5 9.3 L26.4 9.6 L18.6 15.6 L21.3 25.2 L13.2 19.7 L5.1 25.2 L7.8 15.6 L0 9.6 L9.9 9.3 Z" fill="none" stroke="#8f8b8c" stroke-width="1.6" stroke-linejoin="round"/><path transform="translate(69.60,0)" d="M13.2 0.2 L16.5 9.3 L26.4 9.6 L18.6 15.6 L21.3 25.2 L13.2 19.7 L5.1 25.2 L7.8 15.6 L0 9.6 L9.9 9.3 Z" fill="none" stroke="#8f8b8c" stroke-width="1.6" stroke-linejoin="round"/><path transform="translate(104.40,0)" d="M13.2 0.2 L16.5 9.3 L26.4 9.6 L18.6 15.6 L21.3 25.2 L13.2 19.7 L5.1 25.2 L7.8 15.6 L0 9.6 L9.9 9.3 Z" fill="none" stroke="#8f8b8c" stroke-width="1.6" stroke-linejoin="round"/><path transform="translate(139.20,0)" d="M13.2 0.2 L16.5 9.3 L26.4 9.6 L18.6 15.6 L21.3 25.2 L13.2 19.7 L5.1 25.2 L7.8 15.6 L0 9.6 L9.9 9.3 Z" fill="none" stroke="#8f8b8c" stroke-width="1.6" stroke-linejoin="round"/></svg>
<div class="t" style="left:833.50px;top:941.97px;font-size:26.5px;font-weight:400;color:#e6e3e1;letter-spacing:0px;-webkit-text-stroke:0.35px #e6e3e1;">_DSC8916.ARW</div>
<div class="t" style="left:1069.00px;top:941.97px;font-size:26.5px;font-weight:400;color:#e6e3e1;letter-spacing:0.45px;-webkit-text-stroke:0.35px #e6e3e1;">52,9 MB</div>
<div class="t" style="left:1252.5px;top:941.97px;font-size:26.5px;color:#e6e3e1;width:141px;overflow:hidden;-webkit-text-stroke:0.35px #e6e3e1;">Sony ARW raw image</div>
<svg class="b" style="left:509px;top:991.50px" width="24" height="24" viewBox="0 0 24 24"><rect x="1" y="1" width="21.3" height="21.4" rx="3.8" fill="none" stroke="#3d8bf5" stroke-width="2"/></svg>
<svg class="b" style="left:601.5px;top:990.30px" width="170" height="26" viewBox="0 0 170 26"><path transform="translate(0.00,0)" d="M13.2 0.2 L16.5 9.3 L26.4 9.6 L18.6 15.6 L21.3 25.2 L13.2 19.7 L5.1 25.2 L7.8 15.6 L0 9.6 L9.9 9.3 Z" fill="none" stroke="#8f8b8c" stroke-width="1.6" stroke-linejoin="round"/><path transform="translate(34.80,0)" d="M13.2 0.2 L16.5 9.3 L26.4 9.6 L18.6 15.6 L21.3 25.2 L13.2 19.7 L5.1 25.2 L7.8 15.6 L0 9.6 L9.9 9.3 Z" fill="none" stroke="#8f8b8c" stroke-width="1.6" stroke-linejoin="round"/><path transform="translate(69.60,0)" d="M13.2 0.2 L16.5 9.3 L26.4 9.6 L18.6 15.6 L21.3 25.2 L13.2 19.7 L5.1 25.2 L7.8 15.6 L0 9.6 L9.9 9.3 Z" fill="none" stroke="#8f8b8c" stroke-width="1.6" stroke-linejoin="round"/><path transform="translate(104.40,0)" d="M13.2 0.2 L16.5 9.3 L26.4 9.6 L18.6 15.6 L21.3 25.2 L13.2 19.7 L5.1 25.2 L7.8 15.6 L0 9.6 L9.9 9.3 Z" fill="none" stroke="#8f8b8c" stroke-width="1.6" stroke-linejoin="round"/><path transform="translate(139.20,0)" d="M13.2 0.2 L16.5 9.3 L26.4 9.6 L18.6 15.6 L21.3 25.2 L13.2 19.7 L5.1 25.2 L7.8 15.6 L0 9.6 L9.9 9.3 Z" fill="none" stroke="#8f8b8c" stroke-width="1.6" stroke-linejoin="round"/></svg>
<div class="t" style="left:833.50px;top:989.97px;font-size:26.5px;font-weight:400;color:#e6e3e1;letter-spacing:0px;-webkit-text-stroke:0.35px #e6e3e1;">_DSC8917.ARW</div>
<div class="t" style="left:1069.00px;top:989.97px;font-size:26.5px;font-weight:400;color:#e6e3e1;letter-spacing:0.45px;-webkit-text-stroke:0.35px #e6e3e1;">52,9 MB</div>
<div class="t" style="left:1252.5px;top:989.97px;font-size:26.5px;color:#e6e3e1;width:141px;overflow:hidden;-webkit-text-stroke:0.35px #e6e3e1;">Sony ARW raw image</div>
<div class="b" style="left:475px;top:1027.20px;width:919px;height:44.80px;background:#35302d;"></div>
<svg class="b" style="left:509px;top:1039.50px" width="24" height="24" viewBox="0 0 24 24"><rect x="0" y="0" width="23.3" height="23.4" rx="4.6" fill="#3d8bf5"/><path d="M6.3 13 L10.2 17.2 L17.1 6.8" fill="none" stroke="#2a2320" stroke-width="2" stroke-linecap="round" stroke-linejoin="round"/></svg>
<svg class="b" style="left:601.5px;top:1038.30px" width="170" height="26" viewBox="0 0 170 26"><path transform="translate(0.00,0)" d="M13.2 0.2 L16.5 9.3 L26.4 9.6 L18.6 15.6 L21.3 25.2 L13.2 19.7 L5.1 25.2 L7.8 15.6 L0 9.6 L9.9 9.3 Z" fill="#f7d647"/><path transform="translate(34.80,0)" d="M13.2 0.2 L16.5 9.3 L26.4 9.6 L18.6 15.6 L21.3 25.2 L13.2 19.7 L5.1 25.2 L7.8 15.6 L0 9.6 L9.9 9.3 Z" fill="#f7d647"/><path transform="translate(69.60,0)" d="M13.2 0.2 L16.5 9.3 L26.4 9.6 L18.6 15.6 L21.3 25.2 L13.2 19.7 L5.1 25.2 L7.8 15.6 L0 9.6 L9.9 9.3 Z" fill="#f7d647"/><path transform="translate(104.40,0)" d="M13.2 0.2 L16.5 9.3 L26.4 9.6 L18.6 15.6 L21.3 25.2 L13.2 19.7 L5.1 25.2 L7.8 15.6 L0 9.6 L9.9 9.3 Z" fill="none" stroke="#8f8b8c" stroke-width="1.6" stroke-linejoin="round"/><path transform="translate(139.20,0)" d="M13.2 0.2 L16.5 9.3 L26.4 9.6 L18.6 15.6 L21.3 25.2 L13.2 19.7 L5.1 25.2 L7.8 15.6 L0 9.6 L9.9 9.3 Z" fill="none" stroke="#8f8b8c" stroke-width="1.6" stroke-linejoin="round"/></svg>
<div class="t" style="left:833.50px;top:1037.97px;font-size:26.5px;font-weight:400;color:#e6e3e1;letter-spacing:0px;-webkit-text-stroke:0.35px #e6e3e1;">_DSC8918.ARW</div>
<div class="t" style="left:1069.00px;top:1037.97px;font-size:26.5px;font-weight:400;color:#e6e3e1;letter-spacing:0.45px;-webkit-text-stroke:0.35px #e6e3e1;">52,9 MB</div>
<div class="t" style="left:1252.5px;top:1037.97px;font-size:26.5px;color:#e6e3e1;width:141px;overflow:hidden;-webkit-text-stroke:0.35px #e6e3e1;">Sony ARW raw image</div>
<div class="b" style="left:1394px;top:180px;width:2px;height:1641px;background:#000;"></div>
<svg width="0" height="0" style="position:absolute"><defs><symbol id="thumb" viewBox="0 0 200 200"><defs><linearGradient id="tg" x1="0" y1="0" x2="0.3" y2="1"><stop offset="0" stop-color="#c1cbe5"/><stop offset="0.5" stop-color="#c8d2ea"/><stop offset="1" stop-color="#cdd6ed"/></linearGradient><filter id="tb" x="-30%" y="-30%" width="160%" height="160%"><feGaussianBlur stdDeviation="2.5"/></filter><filter id="tb2" x="-30%" y="-30%" width="160%" height="160%"><feGaussianBlur stdDeviation="0.8"/></filter></defs><rect width="200" height="200" fill="url(#tg)"/><g fill="#a4aecb" opacity="0.55" filter="url(#tb)"><ellipse cx="45" cy="175" rx="14" ry="12"/><ellipse cx="80" cy="165" rx="12" ry="14"/><ellipse cx="130" cy="180" rx="14" ry="12"/><ellipse cx="160" cy="140" rx="10" ry="8"/><ellipse cx="25" cy="185" rx="10" ry="8"/><ellipse cx="100" cy="190" rx="12" ry="8"/><ellipse cx="60" cy="140" rx="10" ry="6"/><ellipse cx="150" cy="190" rx="10" ry="8"/></g><g fill="#dfe5f5" opacity="0.7" filter="url(#tb)"><ellipse cx="105" cy="125" rx="12" ry="20"/><ellipse cx="112" cy="160" rx="16" ry="22"/><ellipse cx="65" cy="150" rx="14" ry="10"/><ellipse cx="35" cy="160" rx="12" ry="10"/><ellipse cx="160" cy="125" rx="14" ry="8"/><ellipse cx="175" cy="160" rx="10" ry="12"/><ellipse cx="88" cy="180" rx="12" ry="10"/><ellipse cx="140" cy="165" rx="10" ry="14"/><ellipse cx="55" cy="190" rx="12" ry="8"/><ellipse cx="170" cy="190" rx="12" ry="8"/></g><g fill="#e3e8f6" opacity="0.75" filter="url(#tb2)"><circle cx="86.0" cy="109.2" r="4.7"/><circle cx="84.5" cy="108.6" r="5.1"/><circle cx="78.8" cy="114.5" r="2.9"/><circle cx="79.5" cy="120.1" r="3.5"/><circle cx="72.0" cy="124.0" r="2.9"/><circle cx="74.1" cy="125.5" r="3.5"/><circle cx="70.3" cy="128.9" r="3.2"/><circle cx="62.8" cy="130.4" r="5.6"/><circle cx="57.2" cy="133.5" r="4.6"/><circle cx="56.2" cy="135.5" r="3.6"/><circle cx="49.6" cy="137.7" r="5.5"/><circle cx="50.6" cy="135.8" r="3.1"/><circle cx="46.0" cy="136.8" r="5.8"/><circle cx="40.5" cy="139.3" r="5.1"/><circle cx="37.7" cy="138.3" r="4.6"/><circle cx="30.6" cy="139.3" r="4.4"/><circle cx="26.2" cy="139.2" r="6.0"/><circle cx="24.2" cy="141.0" r="4.4"/><circle cx="21.8" cy="144.6" r="5.4"/><circle cx="17.0" cy="148.6" r="5.4"/><circle cx="18.2" cy="148.9" r="4.7"/><circle cx="16.7" cy="154.6" r="4.1"/><circle cx="11.4" cy="157.5" r="4.1"/><circle cx="12.2" cy="161.7" r="3.8"/><circle cx="6.1" cy="161.6" r="4.2"/><circle cx="6.5" cy="167.3" r="5.3"/><circle cx="1.8" cy="170.7" r="5.2"/><circle cx="4.0" cy="174.8" r="3.5"/><circle cx="0.3" cy="177.5" r="2.5"/><circle cx="50.3" cy="121.1" r="4.1"/><circle cx="52.5" cy="123.1" r="3.7"/><circle cx="56.9" cy="125.3" r="3.7"/><circle cx="60.7" cy="125.6" r="5.9"/><circle cx="63.1" cy="128.4" r="4.2"/><circle cx="67.7" cy="129.8" r="3.1"/><circle cx="71.1" cy="132.7" r="4.0"/><circle cx="72.0" cy="132.4" r="5.0"/><circle cx="76.3" cy="118.4" r="4.7"/><circle cx="77.8" cy="121.6" r="3.1"/><circle cx="82.7" cy="126.5" r="3.3"/><circle cx="79.5" cy="130.6" r="5.4"/><circle cx="80.6" cy="135.9" r="2.8"/><circle cx="87.9" cy="140.2" r="5.9"/><circle cx="88.2" cy="141.1" r="4.7"/><circle cx="94.7" cy="146.4" r="4.5"/><circle cx="119.4" cy="107.0" r="3.7"/><circle cx="121.8" cy="111.3" r="4.7"/><circle cx="124.8" cy="116.2" r="3.8"/><circle cx="127.6" cy="117.2" r="3.4"/><circle cx="127.2" cy="118.3" r="3.5"/><circle cx="128.8" cy="123.6" r="4.1"/><circle cx="133.9" cy="123.6" r="2.5"/><circle cx="135.8" cy="125.6" r="5.2"/><circle cx="141.9" cy="128.9" r="4.2"/><circle cx="144.4" cy="131.7" r="2.9"/><circle cx="142.6" cy="137.0" r="4.1"/><circle cx="142.5" cy="139.3" r="2.6"/><circle cx="142.9" cy="141.0" r="5.6"/><circle cx="141.8" cy="147.2" r="4.0"/><circle cx="142.5" cy="149.3" r="4.2"/><circle cx="136.1" cy="154.5" r="5.4"/><circle cx="136.0" cy="158.1" r="4.0"/><circle cx="135.7" cy="161.0" r="3.0"/><circle cx="131.8" cy="163.6" r="5.3"/><circle cx="134.0" cy="166.6" r="5.3"/><circle cx="133.0" cy="174.8" r="5.9"/><circle cx="130.3" cy="176.0" r="5.8"/><circle cx="126.0" cy="181.5" r="3.9"/><circle cx="127.5" cy="185.5" r="2.7"/><circle cx="125.6" cy="188.1" r="3.0"/><circle cx="127.6" cy="192.7" r="4.2"/><circle cx="126.5" cy="197.7" r="4.3"/><circle cx="138.3" cy="105.5" r="3.4"/><circle cx="139.8" cy="106.1" r="4.3"/><circle cx="143.5" cy="108.5" r="4.8"/><circle cx="149.9" cy="107.8" r="5.6"/><circle cx="154.8" cy="108.5" r="2.6"/><circle cx="159.7" cy="112.7" r="2.9"/><circle cx="161.0" cy="113.2" r="3.0"/><circle cx="161.5" cy="116.8" r="3.9"/><circle cx="166.8" cy="119.4" r="5.3"/><circle cx="168.2" cy="118.6" r="3.9"/><circle cx="171.1" cy="122.9" r="5.2"/><circle cx="177.1" cy="125.4" r="4.7"/><circle cx="182.6" cy="126.6" r="3.8"/><circle cx="183.0" cy="128.6" r="3.3"/><circle cx="188.5" cy="133.7" r="3.8"/><circle cx="191.3" cy="133.9" r="4.2"/><circle cx="192.4" cy="138.8" r="3.5"/><circle cx="194.3" cy="142.6" r="2.8"/><circle cx="199.7" cy="142.2" r="5.1"/><circle cx="155.4" cy="145.5" r="4.0"/><circle cx="159.2" cy="146.1" r="4.4"/><circle cx="162.6" cy="142.7" r="4.2"/><circle cx="163.9" cy="141.7" r="3.4"/><circle cx="168.4" cy="140.6" r="4.3"/><circle cx="173.5" cy="141.9" r="5.7"/><circle cx="176.0" cy="141.0" r="4.5"/><circle cx="179.5" cy="140.3" r="5.7"/><circle cx="182.2" cy="139.7" r="3.3"/><circle cx="186.2" cy="139.5" r="3.0"/><circle cx="194.0" cy="138.7" r="2.7"/><circle cx="195.9" cy="141.5" r="4.0"/><circle cx="153.4" cy="157.0" r="5.6"/><circle cx="155.7" cy="160.9" r="4.0"/><circle cx="156.2" cy="163.6" r="5.0"/><circle cx="154.3" cy="167.5" r="3.8"/><circle cx="159.6" cy="174.2" r="2.7"/><circle cx="160.0" cy="178.7" r="5.5"/><circle cx="157.2" cy="183.8" r="2.5"/><circle cx="156.0" cy="184.9" r="2.8"/><circle cx="157.5" cy="191.0" r="4.1"/><circle cx="153.6" cy="194.6" r="4.0"/><circle cx="12.3" cy="189.7" r="4.4"/><circle cx="10.2" cy="189.0" r="5.9"/><circle cx="14.7" cy="188.3" r="3.5"/><circle cx="22.9" cy="188.9" r="3.4"/><circle cx="23.7" cy="186.2" r="4.7"/><circle cx="25.9" cy="186.4" r="4.2"/><circle cx="31.9" cy="188.6" r="5.3"/><circle cx="40.5" cy="195.8" r="4.7"/><circle cx="38.9" cy="188.6" r="3.9"/><circle cx="45.7" cy="186.5" r="3.9"/><circle cx="46.4" cy="181.0" r="4.9"/><circle cx="48.6" cy="177.2" r="3.8"/><circle cx="111.5" cy="161.2" r="3.7"/><circle cx="114.6" cy="162.7" r="3.6"/><circle cx="114.5" cy="167.7" r="2.8"/><circle cx="115.1" cy="171.9" r="5.6"/><circle cx="113.8" cy="175.6" r="4.6"/><circle cx="119.8" cy="180.7" r="3.3"/><circle cx="61.9" cy="154.8" r="4.8"/><circle cx="59.4" cy="157.6" r="3.9"/><circle cx="63.2" cy="162.0" r="5.0"/><circle cx="65.0" cy="165.0" r="5.6"/><circle cx="67.4" cy="168.8" r="3.3"/><circle cx="73.4" cy="172.2" r="5.6"/><circle cx="74.6" cy="178.4" r="3.5"/><circle cx="74.1" cy="179.3" r="4.6"/><circle cx="79.3" cy="185.1" r="4.8"/><circle cx="82.4" cy="188.5" r="3.6"/><circle cx="137.2" cy="161.6" r="3.3"/><circle cx="137.9" cy="163.8" r="2.8"/><circle cx="145.3" cy="168.2" r="5.3"/><circle cx="148.8" cy="168.2" r="4.7"/><circle cx="149.1" cy="174.1" r="4.1"/><circle cx="150.6" cy="176.0" r="2.9"/><circle cx="97.8" cy="165.3" r="4.2"/><circle cx="96.2" cy="166.6" r="2.9"/><circle cx="97.0" cy="170.0" r="5.7"/><circle cx="98.0" cy="175.9" r="3.5"/><circle cx="96.9" cy="177.6" r="4.8"/><circle cx="102.6" cy="180.9" r="3.9"/><circle cx="19.1" cy="169.5" r="3.8"/><circle cx="26.5" cy="173.6" r="3.3"/><circle cx="25.4" cy="175.4" r="4.9"/><circle cx="27.9" cy="181.0" r="5.7"/><circle cx="30.0" cy="187.2" r="5.6"/><circle cx="30.7" cy="190.2" r="3.0"/><circle cx="166.3" cy="163.2" r="6.0"/><circle cx="168.7" cy="166.3" r="2.9"/><circle cx="170.4" cy="170.8" r="3.2"/><circle cx="173.8" cy="171.4" r="4.6"/><circle cx="174.9" cy="174.6" r="5.8"/><circle cx="177.2" cy="179.2" r="5.2"/><circle cx="178.5" cy="180.9" r="5.0"/><circle cx="118.6" cy="141.4" r="3.8"/><circle cx="122.1" cy="139.8" r="5.9"/><circle cx="129.2" cy="135.5" r="4.2"/><circle cx="132.0" cy="136.7" r="4.0"/><circle cx="136.0" cy="133.2" r="2.7"/></g><g fill="#7a84a6" opacity="0.45" filter="url(#tb2)"><circle cx="82.7" cy="114.7" r="3.4"/><circle cx="76.6" cy="117.7" r="2.6"/><circle cx="75.2" cy="122.4" r="3.1"/><circle cx="77.4" cy="126.6" r="1.9"/><circle cx="61.8" cy="133.4" r="1.8"/><circle cx="61.8" cy="135.8" r="2.1"/><circle cx="53.9" cy="138.4" r="3.5"/><circle cx="50.0" cy="138.1" r="2.7"/><circle cx="44.7" cy="139.3" r="2.5"/><circle cx="36.7" cy="140.4" r="3.4"/><circle cx="30.0" cy="143.6" r="1.7"/><circle cx="19.7" cy="147.9" r="3.3"/><circle cx="18.2" cy="152.8" r="1.8"/><circle cx="11.0" cy="158.5" r="2.1"/><circle cx="8.9" cy="165.8" r="3.1"/><circle cx="3.9" cy="173.5" r="2.5"/><circle cx="59.7" cy="129.8" r="1.8"/><circle cx="73.4" cy="137.4" r="2.8"/><circle cx="77.2" cy="121.0" r="1.6"/><circle cx="80.2" cy="126.8" r="2.3"/><circle cx="79.9" cy="130.3" r="2.1"/><circle cx="117.6" cy="110.9" r="2.6"/><circle cx="118.5" cy="116.2" r="2.0"/><circle cx="127.1" cy="120.1" r="2.1"/><circle cx="136.3" cy="129.8" r="3.5"/><circle cx="141.8" cy="135.6" r="2.2"/><circle cx="138.5" cy="152.2" r="3.2"/><circle cx="134.1" cy="164.1" r="2.2"/><circle cx="128.6" cy="177.4" r="3.2"/><circle cx="127.2" cy="180.8" r="3.3"/><circle cx="127.4" cy="182.7" r="1.7"/><circle cx="123.3" cy="196.6" r="2.9"/><circle cx="140.4" cy="110.8" r="3.0"/><circle cx="146.5" cy="110.0" r="1.7"/><circle cx="154.3" cy="112.4" r="3.4"/><circle cx="160.8" cy="116.3" r="2.2"/><circle cx="167.5" cy="121.7" r="2.7"/><circle cx="172.5" cy="123.4" r="1.6"/><circle cx="175.8" cy="128.1" r="1.8"/><circle cx="178.6" cy="130.3" r="2.1"/><circle cx="189.0" cy="140.1" r="1.9"/><circle cx="194.7" cy="143.0" r="2.1"/><circle cx="200.6" cy="146.9" r="2.8"/><circle cx="152.1" cy="149.1" r="3.1"/><circle cx="154.1" cy="150.2" r="1.7"/><circle cx="159.5" cy="146.2" r="1.6"/><circle cx="166.9" cy="144.5" r="1.6"/><circle cx="167.0" cy="143.6" r="2.1"/><circle cx="173.1" cy="143.5" r="1.5"/><circle cx="186.1" cy="142.9" r="3.0"/><circle cx="189.1" cy="142.7" r="2.4"/><circle cx="192.2" cy="142.3" r="2.1"/><circle cx="157.4" cy="171.6" r="2.0"/><circle cx="156.2" cy="176.6" r="1.6"/><circle cx="156.7" cy="180.7" r="2.4"/><circle cx="157.0" cy="192.7" r="2.1"/><circle cx="9.1" cy="191.0" r="3.1"/><circle cx="12.5" cy="190.8" r="3.3"/><circle cx="15.2" cy="190.7" r="3.0"/><circle cx="30.7" cy="189.9" r="2.9"/><circle cx="39.1" cy="198.4" r="2.5"/><circle cx="39.9" cy="194.1" r="2.3"/><circle cx="45.9" cy="178.3" r="2.1"/><circle cx="116.5" cy="182.5" r="1.5"/><circle cx="62.8" cy="163.9" r="2.1"/><circle cx="74.0" cy="174.9" r="2.6"/><circle cx="72.1" cy="179.7" r="1.6"/><circle cx="79.8" cy="188.6" r="2.5"/><circle cx="134.5" cy="162.2" r="1.7"/><circle cx="141.2" cy="167.3" r="3.0"/><circle cx="144.5" cy="172.5" r="1.6"/><circle cx="148.2" cy="175.8" r="2.3"/><circle cx="96.1" cy="165.9" r="3.0"/><circle cx="99.1" cy="174.1" r="2.9"/><circle cx="98.6" cy="176.7" r="1.6"/><circle cx="101.9" cy="181.6" r="2.5"/><circle cx="97.5" cy="186.3" r="3.1"/><circle cx="22.1" cy="172.2" r="2.3"/><circle cx="22.6" cy="178.2" r="1.7"/><circle cx="25.0" cy="180.4" r="3.1"/><circle cx="28.3" cy="183.2" r="1.5"/><circle cx="29.3" cy="189.7" r="3.5"/><circle cx="166.9" cy="167.0" r="2.4"/><circle cx="172.7" cy="170.7" r="2.3"/><circle cx="178.9" cy="178.5" r="2.0"/><circle cx="124.9" cy="141.4" r="2.6"/><circle cx="133.6" cy="137.4" r="2.2"/></g><g fill="none" stroke="#2b2f43" stroke-width="0.85" stroke-dasharray="3 1.3 1.6 1" stroke-linecap="round" stroke-linejoin="round"><path d="M99.8 92.4 L98.3 94.7 L96.0 97.6 L94.4 100.4 L92.2 102.1 L89.0 105.1 L86.6 106.9 L84.7 109.5 L81.9 112.4 L80.3 114.6 L79.3 116.6 L77.5 119.3 L76.4 121.4 L75.0 123.6 L72.4 125.5 L70.2 127.9 L68.2 128.9 L66.5 131.0 L63.8 132.8 L61.8 133.5 L59.5 134.4 L56.9 136.2 L54.7 137.3 L52.2 137.6 L49.3 138.5 L47.0 138.1 L43.8 139.2 L41.5 139.5 L38.2 139.5 L35.5 140.5 L33.3 141.2 L30.1 142.4 L27.2 142.3 L25.0 143.2 L22.5 145.4 L21.2 147.7 L19.5 148.7 L17.5 151.3 L15.2 153.1 L13.5 154.5 L11.8 157.0 L10.9 159.3 L9.5 160.6 L7.9 162.8 L7.2 164.8 L5.0 167.1 L3.6 169.2 L2.7 171.6 L1.4 173.9 L0.9 177.3 L-0.1 180.1"/><path d="M48.8 121.6 L50.6 123.2 L53.2 124.9 L55.7 125.9 L57.9 127.3 L61.0 128.1 L62.9 129.4 L65.9 131.4 L68.7 132.6 L72.0 134.3 L74.4 135.6"/><path d="M78.8 119.6 L79.5 122.8 L79.7 124.5 L80.4 127.4 L80.4 130.2 L80.1 132.6 L80.1 134.9 L79.9 138.2 L83.1 140.4 L85.6 141.8 L88.7 144.4 L92.3 146.4"/><path d="M99.8 94.6 L103.9 96.2 L107.5 97.9"/><path d="M111.8 104.6 L114.0 107.6 L116.4 109.4 L117.6 111.9 L119.6 113.8 L121.6 116.5 L124.0 117.9 L125.8 120.1 L128.5 121.9 L129.7 124.0 L132.6 125.1 L134.5 126.8 L136.4 127.9 L138.8 128.4 L140.6 130.4 L142.8 133.9 L143.8 137.6 L144.0 140.8 L143.2 143.5 L141.9 146.7 L140.9 148.9 L139.5 152.2 L138.9 154.3 L138.2 156.9 L136.5 159.4 L135.8 162.5 L135.3 164.6 L134.1 167.1 L133.1 169.8 L131.4 172.3 L130.2 175.1 L129.5 178.0 L128.6 180.9 L127.7 183.7 L127.4 185.8 L126.2 189.0 L125.4 191.1 L125.1 194.3 L124.2 196.6 L124.3 199.2"/><path d="M125.5 105.4 L128.8 106.1 L132.2 106.4 L135.3 107.4 L137.8 108.2 L141.0 108.7 L144.1 109.3 L146.7 109.5 L149.5 110.3 L152.6 111.5 L154.1 112.4 L156.8 113.1 L158.8 115.1 L161.8 115.6 L164.0 117.2 L165.9 118.8 L168.0 120.1 L170.1 122.2 L173.0 123.9 L175.2 125.3 L177.3 127.2 L179.4 128.9 L181.7 130.5 L183.6 131.9 L185.2 134.4 L187.1 135.4 L188.9 137.9 L191.0 139.4 L193.7 141.6 L196.0 143.2 L197.9 145.3"/><path d="M152.8 149.1 L155.3 148.1 L157.7 147.4 L160.1 145.5 L163.4 145.2 L165.7 142.9 L168.8 141.6 L171.5 141.6 L173.9 141.5 L176.7 141.8 L179.6 141.9 L181.6 142.5 L184.9 142.2 L186.7 141.9 L189.5 141.9 L191.5 142.0 L194.8 142.2 L197.4 142.2"/><path d="M152.8 157.9 L153.8 160.6 L154.1 163.3 L155.2 166.4 L156.2 169.1 L156.7 172.2 L157.8 175.7 L157.8 178.0 L157.2 181.5 L156.6 183.6 L156.1 186.6 L155.0 189.3 L154.2 191.9 L153.9 194.6"/><path d="M9.0 190.8 L12.6 190.7 L14.6 190.3 L17.0 189.1 L19.5 188.6 L22.7 189.3 L25.2 189.5 L27.8 189.7 L30.5 189.4 L32.7 189.3"/><path d="M38.6 198.1 L39.1 194.7 L40.3 191.6 L41.4 189.1 L43.0 186.8 L43.7 184.8 L45.3 182.2 L47.1 180.5 L47.8 178.2"/><path d="M110.6 161.7 L111.3 164.4 L112.9 167.0 L112.8 169.4 L114.0 171.9 L114.4 174.3 L115.4 176.6 L116.4 179.2 L116.8 181.6"/><path d="M59.3 155.1 L60.8 156.7 L62.3 160.0 L63.6 161.8 L65.2 164.2 L67.0 165.6 L68.9 167.8 L70.2 170.0 L71.6 172.0 L72.1 174.6 L73.4 177.5 L74.8 179.4 L76.0 182.3 L77.5 184.4 L79.0 187.0 L80.2 189.3"/><path d="M135.6 161.6 L138.4 163.1 L139.9 165.0 L142.1 166.1 L143.9 168.2 L145.0 170.1 L147.3 173.4 L148.1 175.1 L150.1 177.8"/><path d="M95.2 164.5 L96.0 167.4 L96.8 170.7 L98.0 173.6 L99.3 176.1 L99.7 178.3 L99.6 181.2 L100.1 183.6"/><path d="M22.4 171.9 L23.5 174.9 L24.9 176.9 L26.1 180.0 L26.6 182.2 L27.7 184.5 L27.8 186.7 L28.4 189.9 L28.9 191.8"/><path d="M168.1 164.9 L170.1 167.2 L171.8 169.0 L174.3 171.9 L175.7 174.0 L177.3 176.5 L178.9 179.3 L179.6 181.3 L181.1 183.7"/><path d="M119.8 142.5 L122.3 141.4 L125.2 139.9 L127.7 139.5 L131.0 137.9 L133.3 136.9 L135.6 136.2"/></g><g fill="none" stroke="#363b52" stroke-width="0.65" stroke-dasharray="2 0.9" opacity="0.8"><path d="M94.1 99.9 Q90.6 102.3 86.6 103.6"/><path d="M94.6 99.2 Q91.7 98.9 90.1 99.5"/><path d="M99.4 92.7 Q99.7 97.6 98.6 101.4"/><path d="M90.7 103.3 Q91.6 107.8 91.6 110.6"/><path d="M90.1 103.9 Q88.3 104.3 86.5 103.9"/><path d="M94.0 100.0 Q92.9 101.4 92.9 103.3"/><path d="M82.2 111.8 Q77.9 114.0 75.6 114.5"/><path d="M84.4 109.6 Q81.8 110.8 77.7 110.9"/><path d="M85.5 108.5 Q85.0 112.6 85.7 115.0"/><path d="M80.3 114.8 Q80.6 117.1 80.3 119.1"/><path d="M81.2 113.4 Q80.3 117.9 81.0 121.9"/><path d="M79.9 115.5 Q77.0 116.4 74.9 118.2"/><path d="M76.6 121.2 Q73.6 122.0 69.8 122.4"/><path d="M76.7 121.0 Q77.1 124.5 77.1 127.3"/><path d="M77.8 119.2 Q74.0 119.5 69.7 120.4"/><path d="M72.9 125.6 Q73.3 129.8 72.4 132.3"/><path d="M73.0 125.5 Q71.2 129.6 70.2 132.3"/><path d="M72.0 126.3 Q69.7 126.6 68.4 126.6"/><path d="M53.2 137.7 Q50.9 137.2 48.7 136.7"/><path d="M62.3 133.3 Q61.8 132.3 59.4 131.7"/><path d="M57.1 135.8 Q55.4 139.3 54.3 142.2"/><path d="M47.4 138.5 Q46.1 142.1 43.9 144.8"/><path d="M49.3 138.3 Q45.7 141.0 42.4 143.8"/><path d="M40.8 139.2 Q40.0 141.5 37.4 143.9"/><path d="M30.8 141.8 Q29.4 143.8 26.2 147.4"/><path d="M27.9 142.7 Q25.1 140.3 20.9 139.4"/><path d="M31.9 141.4 Q31.4 144.3 29.6 148.9"/><path d="M20.1 148.3 Q20.4 152.6 21.4 155.7"/><path d="M18.9 149.5 Q14.5 149.3 10.1 149.1"/><path d="M17.5 150.9 Q13.0 152.4 9.3 153.9"/><path d="M13.2 155.4 Q14.5 157.1 13.9 159.9"/><path d="M6.3 165.9 Q3.9 166.4 -0.0 167.0"/><path d="M10.1 160.2 Q7.2 162.0 5.0 162.7"/><path d="M2.0 173.4 Q-2.3 174.7 -5.9 176.9"/><path d="M1.8 173.9 Q-0.2 175.1 -2.8 178.0"/><path d="M0.9 177.1 Q0.6 180.4 1.7 181.9"/><path d="M49.4 122.5 Q53.1 122.1 56.5 120.9"/><path d="M55.8 125.9 Q59.6 124.9 61.5 123.2"/><path d="M56.9 126.5 Q60.0 125.1 61.0 125.0"/><path d="M62.6 129.3 Q65.0 133.3 66.9 136.5"/><path d="M59.1 127.6 Q61.3 130.1 62.5 133.3"/><path d="M60.1 128.1 Q61.4 130.1 63.1 131.7"/><path d="M72.8 134.3 Q73.8 134.3 76.3 134.0"/><path d="M71.3 133.6 Q75.3 131.4 79.3 129.6"/><path d="M70.1 133.0 Q71.4 136.7 73.6 139.0"/><path d="M79.7 125.0 Q78.8 127.2 77.7 129.0"/><path d="M80.2 129.1 Q80.4 131.2 79.1 132.8"/><path d="M79.2 121.3 Q79.6 122.2 81.4 123.7"/><path d="M80.3 135.5 Q77.4 138.2 75.2 141.6"/><path d="M80.3 136.0 Q79.5 139.8 77.0 142.5"/><path d="M80.3 135.5 Q82.3 139.8 84.2 142.3"/><path d="M82.2 139.3 Q81.9 141.1 82.0 144.3"/><path d="M84.2 140.7 Q86.3 140.9 90.2 139.6"/><path d="M85.5 141.7 Q85.3 143.9 86.1 146.7"/><path d="M91.9 145.9 Q96.3 146.0 98.8 146.9"/><path d="M86.2 142.1 Q85.8 145.6 86.5 148.7"/><path d="M91.7 145.8 Q93.9 147.0 97.3 146.8"/><path d="M103.5 96.3 Q105.0 97.8 106.3 99.6"/><path d="M103.6 96.3 Q106.9 95.2 111.5 94.0"/><path d="M102.7 96.0 Q104.0 99.5 103.9 101.1"/><path d="M106.8 97.4 Q109.9 96.1 113.1 93.6"/><path d="M104.2 96.6 Q106.2 101.2 106.2 104.1"/><path d="M107.9 97.8 Q110.5 96.4 112.1 96.0"/><path d="M120.6 114.4 Q125.2 114.0 128.8 114.7"/><path d="M113.8 106.9 Q117.1 108.7 121.0 109.0"/><path d="M119.1 112.8 Q118.4 113.8 118.3 116.0"/><path d="M122.9 116.9 Q126.7 116.4 130.3 116.6"/><path d="M126.1 120.1 Q129.8 119.2 133.6 118.4"/><path d="M129.5 123.5 Q132.3 123.6 134.4 123.6"/><path d="M140.4 129.7 Q139.8 133.1 141.0 138.3"/><path d="M133.7 126.0 Q133.7 127.7 135.2 130.3"/><path d="M131.4 124.8 Q132.1 123.7 134.5 123.1"/><path d="M141.1 130.3 Q139.2 133.5 138.2 137.0"/><path d="M141.7 131.5 Q139.6 134.8 138.6 136.3"/><path d="M142.6 133.7 Q145.9 135.0 147.9 137.4"/><path d="M143.1 135.7 Q142.9 137.9 141.5 140.6"/><path d="M143.0 134.9 Q142.6 138.0 141.6 139.7"/><path d="M143.6 138.8 Q142.0 141.8 141.2 146.7"/><path d="M140.5 150.0 Q139.8 152.6 140.8 155.9"/><path d="M143.2 143.1 Q141.0 144.0 138.9 145.3"/><path d="M140.7 149.6 Q139.6 149.6 136.9 150.6"/><path d="M135.1 164.3 Q136.6 165.4 137.3 167.5"/><path d="M135.9 162.2 Q131.6 163.9 127.7 165.5"/><path d="M133.8 168.0 Q134.4 170.8 136.2 172.6"/><path d="M130.1 175.4 Q132.1 180.4 133.6 183.5"/><path d="M131.2 173.4 Q131.5 175.5 131.0 179.0"/><path d="M132.7 170.5 Q128.4 171.3 125.9 171.3"/><path d="M127.0 185.9 Q124.2 188.3 122.0 190.9"/><path d="M128.2 181.6 Q123.7 182.8 120.6 185.5"/><path d="M128.0 182.7 Q126.8 184.2 123.9 184.3"/><path d="M125.0 194.9 Q122.4 196.7 120.4 198.6"/><path d="M126.0 190.2 Q123.9 192.9 120.7 197.5"/><path d="M124.5 197.0 Q122.3 198.9 118.3 202.6"/><path d="M137.1 107.8 Q138.8 109.9 139.7 113.2"/><path d="M137.1 107.8 Q140.1 105.7 142.7 102.6"/><path d="M132.4 106.6 Q134.6 104.0 137.2 102.6"/><path d="M148.6 109.8 Q150.8 107.2 153.1 104.8"/><path d="M145.6 109.3 Q149.1 113.0 151.1 115.6"/><path d="M146.7 109.5 Q149.0 107.8 152.3 107.4"/><path d="M163.0 116.7 Q164.9 116.5 168.0 116.4"/><path d="M154.8 112.5 Q158.0 111.5 161.7 110.2"/><path d="M152.2 111.1 Q155.9 109.8 159.3 108.2"/><path d="M163.7 117.0 Q165.7 119.7 166.5 123.7"/><path d="M172.0 123.0 Q176.3 122.1 180.0 121.5"/><path d="M169.1 120.9 Q171.1 124.2 172.6 128.0"/><path d="M187.2 135.6 Q187.1 137.2 187.3 140.5"/><path d="M184.9 133.6 Q185.1 137.2 186.8 140.7"/><path d="M182.3 131.3 Q181.2 132.8 181.8 135.5"/><path d="M194.9 142.2 Q194.2 144.2 195.1 145.3"/><path d="M193.9 141.4 Q194.2 143.2 194.8 145.0"/><path d="M191.8 139.7 Q195.0 140.8 196.9 141.0"/><path d="M154.0 148.4 Q157.8 148.4 160.8 148.9"/><path d="M158.1 146.8 Q159.5 145.3 162.3 142.1"/><path d="M156.5 147.4 Q158.9 148.6 159.5 148.7"/><path d="M166.6 143.1 Q167.8 139.1 170.6 136.4"/><path d="M161.5 145.3 Q162.6 144.1 163.3 142.1"/><path d="M161.7 145.2 Q163.3 146.5 165.3 147.4"/><path d="M181.0 142.0 Q183.1 143.8 184.2 146.8"/><path d="M183.7 142.0 Q185.4 140.5 187.1 137.6"/><path d="M180.2 142.0 Q183.1 143.2 185.6 144.6"/><path d="M191.0 142.0 Q194.2 144.7 195.7 147.0"/><path d="M190.5 142.0 Q194.4 140.1 196.3 139.0"/><path d="M186.4 142.0 Q188.0 140.2 191.2 137.3"/><path d="M154.4 164.1 Q153.3 165.7 153.7 169.2"/><path d="M153.4 160.7 Q156.6 163.3 158.8 166.2"/><path d="M154.5 164.4 Q157.0 165.8 158.3 168.8"/><path d="M156.5 170.7 Q160.2 171.4 162.2 173.9"/><path d="M155.5 167.6 Q158.1 169.0 159.1 169.5"/><path d="M157.6 174.3 Q159.5 175.4 161.4 176.7"/><path d="M157.8 176.8 Q154.7 179.4 152.3 181.5"/><path d="M157.7 177.2 Q158.6 180.3 160.7 184.3"/><path d="M157.9 176.1 Q156.0 178.5 153.9 181.3"/><path d="M156.6 184.4 Q158.0 187.5 158.1 189.6"/><path d="M154.3 193.9 Q153.7 194.8 151.3 196.0"/><path d="M154.4 193.3 Q156.0 194.5 157.3 197.1"/><path d="M16.0 189.7 Q19.7 186.1 22.1 184.1"/><path d="M11.3 190.5 Q14.2 188.6 15.3 186.8"/><path d="M14.1 190.0 Q14.5 188.6 16.2 186.2"/><path d="M31.4 189.4 Q33.7 187.0 36.2 183.4"/><path d="M20.6 189.0 Q21.8 187.9 24.3 185.0"/><path d="M21.9 189.1 Q23.9 188.2 25.1 187.1"/><path d="M39.6 194.0 Q38.8 191.8 37.1 189.2"/><path d="M39.6 193.7 Q42.2 192.1 43.4 190.4"/><path d="M39.0 196.5 Q41.4 193.9 44.5 190.4"/><path d="M40.1 191.7 Q38.6 188.3 38.7 184.4"/><path d="M42.3 187.7 Q45.4 188.1 48.0 187.1"/><path d="M40.2 191.6 Q39.3 186.5 39.3 183.2"/><path d="M47.3 179.1 Q47.4 176.3 46.4 172.0"/><path d="M43.8 185.1 Q42.6 183.1 41.8 179.3"/><path d="M48.0 178.1 Q48.0 173.9 46.6 169.8"/><path d="M112.5 166.9 Q115.0 168.7 117.0 168.8"/><path d="M111.1 161.9 Q112.7 163.4 114.2 163.4"/><path d="M111.0 161.8 Q113.3 163.9 114.6 165.5"/><path d="M115.5 177.0 Q117.1 178.0 118.5 178.4"/><path d="M114.3 173.1 Q113.5 175.7 111.7 177.7"/><path d="M115.7 177.8 Q117.9 180.0 121.1 181.0"/><path d="M63.5 161.1 Q67.5 163.0 71.7 164.0"/><path d="M60.3 156.1 Q59.5 159.2 58.7 162.5"/><path d="M61.3 157.7 Q62.2 159.8 61.6 161.0"/><path d="M68.4 167.8 Q67.8 170.9 69.3 172.8"/><path d="M68.0 167.4 Q70.8 167.5 72.7 169.3"/><path d="M64.1 162.1 Q63.9 165.2 61.9 168.3"/><path d="M75.2 180.4 Q73.9 182.0 72.5 185.5"/><path d="M75.7 181.4 Q78.0 183.8 81.1 184.3"/><path d="M75.3 180.5 Q78.8 181.9 81.2 181.5"/><path d="M79.8 188.5 Q80.1 191.4 80.3 193.0"/><path d="M76.8 183.3 Q76.3 188.0 76.2 191.8"/><path d="M76.3 182.5 Q79.5 183.6 81.3 182.8"/><path d="M139.6 164.5 Q143.9 165.3 147.0 164.8"/><path d="M137.9 163.2 Q137.9 164.6 138.0 166.4"/><path d="M136.5 162.1 Q139.7 162.3 143.1 162.3"/><path d="M145.6 170.7 Q145.2 173.4 143.9 177.1"/><path d="M149.3 176.9 Q148.2 179.9 148.8 181.0"/><path d="M146.4 172.0 Q147.8 171.8 150.9 172.5"/><path d="M95.4 166.0 Q92.6 168.8 91.7 171.8"/><path d="M95.8 167.2 Q96.5 167.4 98.4 169.2"/><path d="M95.6 166.8 Q100.1 168.8 103.7 170.4"/><path d="M99.1 176.5 Q101.2 180.8 104.5 183.3"/><path d="M99.8 182.2 Q98.6 186.6 96.9 190.7"/><path d="M99.6 180.5 Q96.3 182.8 95.0 185.4"/><path d="M25.0 177.9 Q24.6 181.5 24.6 184.0"/><path d="M26.4 180.8 Q29.0 182.3 30.6 183.5"/><path d="M23.1 174.1 Q25.9 176.5 29.1 177.3"/><path d="M28.4 189.0 Q30.8 190.5 31.5 191.6"/><path d="M28.3 188.7 Q26.7 191.6 25.1 194.2"/><path d="M28.1 187.4 Q31.1 189.6 33.5 190.1"/><path d="M169.6 166.8 Q172.0 168.1 173.2 167.9"/><path d="M175.1 173.0 Q178.1 172.8 179.1 173.3"/><path d="M173.1 170.7 Q178.3 169.3 181.7 169.8"/><path d="M179.6 181.1 Q181.9 182.5 184.8 185.5"/><path d="M177.8 177.7 Q176.0 180.5 175.8 182.8"/><path d="M179.0 180.0 Q177.8 183.6 175.9 186.2"/><path d="M122.5 141.6 Q125.5 144.1 129.5 145.3"/><path d="M121.8 141.9 Q124.4 142.8 128.0 142.5"/><path d="M121.4 142.1 Q122.2 141.6 123.2 139.6"/><path d="M133.1 137.4 Q137.7 138.6 141.0 138.4"/><path d="M135.4 136.7 Q137.6 134.4 138.2 131.2"/><path d="M132.0 137.7 Q133.6 135.5 135.2 132.4"/></g><g fill="#2a2e44" opacity="0.75"><circle cx="88.1" cy="104.8" r="0.69"/><circle cx="83.8" cy="110.2" r="0.74"/><circle cx="82.0" cy="109.6" r="0.62"/><circle cx="81.4" cy="115.4" r="0.65"/><circle cx="76.1" cy="123.6" r="0.45"/><circle cx="76.0" cy="126.0" r="0.50"/><circle cx="73.3" cy="126.2" r="0.77"/><circle cx="64.6" cy="132.1" r="0.71"/><circle cx="62.5" cy="132.7" r="0.79"/><circle cx="61.2" cy="135.1" r="0.76"/><circle cx="51.4" cy="138.5" r="0.59"/><circle cx="50.7" cy="140.1" r="0.75"/><circle cx="46.3" cy="139.1" r="0.48"/><circle cx="42.2" cy="139.5" r="0.93"/><circle cx="40.4" cy="140.2" r="0.88"/><circle cx="37.6" cy="141.2" r="0.98"/><circle cx="28.1" cy="142.3" r="0.51"/><circle cx="25.4" cy="143.3" r="0.82"/><circle cx="25.2" cy="145.5" r="0.58"/><circle cx="19.3" cy="148.9" r="0.86"/><circle cx="19.6" cy="151.5" r="0.66"/><circle cx="17.3" cy="151.8" r="0.91"/><circle cx="14.0" cy="154.3" r="0.95"/><circle cx="11.9" cy="156.0" r="0.95"/><circle cx="12.6" cy="158.2" r="0.82"/><circle cx="13.2" cy="158.5" r="0.67"/><circle cx="8.0" cy="161.8" r="0.54"/><circle cx="8.9" cy="163.9" r="0.63"/><circle cx="7.9" cy="167.5" r="0.87"/><circle cx="3.4" cy="168.2" r="0.98"/><circle cx="2.4" cy="169.5" r="0.83"/><circle cx="0.7" cy="173.7" r="0.99"/><circle cx="1.9" cy="177.4" r="0.46"/><circle cx="57.4" cy="126.9" r="0.72"/><circle cx="59.1" cy="128.9" r="0.78"/><circle cx="60.2" cy="128.3" r="0.70"/><circle cx="65.6" cy="130.3" r="0.49"/><circle cx="68.3" cy="131.7" r="0.78"/><circle cx="79.6" cy="125.4" r="0.49"/><circle cx="81.5" cy="129.1" r="0.94"/><circle cx="78.4" cy="132.6" r="0.99"/><circle cx="81.9" cy="139.5" r="0.75"/><circle cx="82.0" cy="138.4" r="0.58"/><circle cx="82.3" cy="140.0" r="0.56"/><circle cx="84.9" cy="143.9" r="0.76"/><circle cx="88.8" cy="146.5" r="0.94"/><circle cx="92.4" cy="146.9" r="0.46"/><circle cx="115.2" cy="109.3" r="0.92"/><circle cx="121.5" cy="114.3" r="0.55"/><circle cx="126.8" cy="119.7" r="0.82"/><circle cx="128.6" cy="123.0" r="0.61"/><circle cx="137.3" cy="128.4" r="0.65"/><circle cx="142.1" cy="130.2" r="0.90"/><circle cx="141.5" cy="134.0" r="0.52"/><circle cx="143.0" cy="142.6" r="0.92"/><circle cx="142.3" cy="143.8" r="0.52"/><circle cx="141.8" cy="144.9" r="0.53"/><circle cx="142.1" cy="152.0" r="0.82"/><circle cx="140.6" cy="152.4" r="0.93"/><circle cx="139.5" cy="156.0" r="0.84"/><circle cx="135.7" cy="159.2" r="0.98"/><circle cx="135.4" cy="161.2" r="0.69"/><circle cx="133.0" cy="164.7" r="0.64"/><circle cx="133.6" cy="170.5" r="0.65"/><circle cx="129.7" cy="174.6" r="0.85"/><circle cx="128.8" cy="176.8" r="0.73"/><circle cx="129.0" cy="183.0" r="0.53"/><circle cx="125.5" cy="191.5" r="0.61"/><circle cx="127.5" cy="191.9" r="0.97"/><circle cx="122.8" cy="199.3" r="0.54"/><circle cx="131.2" cy="106.3" r="0.75"/><circle cx="137.7" cy="107.6" r="0.92"/><circle cx="142.6" cy="109.7" r="0.68"/><circle cx="144.2" cy="109.0" r="0.62"/><circle cx="159.7" cy="114.6" r="0.95"/><circle cx="164.2" cy="117.8" r="0.96"/><circle cx="179.1" cy="128.6" r="0.84"/><circle cx="179.2" cy="129.9" r="0.80"/><circle cx="182.8" cy="134.0" r="0.62"/><circle cx="187.3" cy="135.1" r="0.80"/><circle cx="188.8" cy="136.7" r="0.67"/><circle cx="192.0" cy="140.8" r="0.75"/><circle cx="193.9" cy="141.4" r="0.84"/><circle cx="196.3" cy="145.1" r="0.76"/><circle cx="160.3" cy="148.0" r="0.93"/><circle cx="167.6" cy="143.4" r="0.99"/><circle cx="172.3" cy="142.4" r="0.83"/><circle cx="172.0" cy="142.4" r="0.96"/><circle cx="174.8" cy="141.8" r="0.88"/><circle cx="182.8" cy="143.1" r="0.99"/><circle cx="188.5" cy="143.7" r="0.50"/><circle cx="190.9" cy="141.1" r="0.93"/><circle cx="191.4" cy="143.4" r="0.74"/><circle cx="193.3" cy="142.1" r="0.57"/><circle cx="197.3" cy="143.8" r="0.55"/><circle cx="155.7" cy="162.6" r="0.57"/><circle cx="156.4" cy="173.8" r="0.56"/><circle cx="156.4" cy="177.7" r="0.54"/><circle cx="153.5" cy="196.7" r="0.59"/><circle cx="10.2" cy="189.5" r="0.73"/><circle cx="16.7" cy="189.4" r="0.75"/><circle cx="16.7" cy="191.2" r="0.64"/><circle cx="30.4" cy="188.8" r="0.83"/><circle cx="39.1" cy="197.2" r="0.63"/><circle cx="47.2" cy="182.3" r="0.64"/><circle cx="109.4" cy="162.6" r="0.48"/><circle cx="112.4" cy="166.6" r="0.72"/><circle cx="114.2" cy="173.9" r="0.53"/><circle cx="113.5" cy="173.8" r="0.46"/><circle cx="118.3" cy="182.7" r="0.56"/><circle cx="57.8" cy="155.7" r="0.99"/><circle cx="62.4" cy="158.1" r="0.71"/><circle cx="62.5" cy="160.1" r="0.56"/><circle cx="67.5" cy="166.8" r="0.97"/><circle cx="70.7" cy="171.5" r="0.86"/><circle cx="73.3" cy="174.8" r="0.80"/><circle cx="79.1" cy="190.5" r="0.68"/><circle cx="143.5" cy="168.7" r="0.77"/><circle cx="148.7" cy="175.4" r="0.49"/><circle cx="150.7" cy="178.9" r="0.61"/><circle cx="96.4" cy="166.5" r="0.75"/><circle cx="96.4" cy="169.1" r="0.86"/><circle cx="99.3" cy="171.0" r="0.63"/><circle cx="97.2" cy="175.0" r="0.66"/><circle cx="99.4" cy="177.5" r="0.61"/><circle cx="99.1" cy="178.3" r="0.79"/><circle cx="97.8" cy="181.4" r="0.65"/><circle cx="101.3" cy="185.6" r="0.74"/><circle cx="25.5" cy="177.3" r="0.76"/><circle cx="24.1" cy="179.1" r="0.94"/><circle cx="27.4" cy="182.3" r="0.93"/><circle cx="28.6" cy="186.6" r="0.97"/><circle cx="30.1" cy="190.1" r="0.53"/><circle cx="167.0" cy="165.9" r="0.90"/><circle cx="168.4" cy="168.8" r="0.49"/><circle cx="169.8" cy="167.6" r="0.48"/><circle cx="172.8" cy="174.1" r="0.54"/><circle cx="175.4" cy="173.5" r="0.82"/><circle cx="178.0" cy="176.2" r="0.58"/><circle cx="180.4" cy="179.5" r="0.76"/><circle cx="178.6" cy="183.7" r="0.82"/><circle cx="181.1" cy="185.2" r="0.51"/><circle cx="120.2" cy="141.6" r="0.77"/><circle cx="124.5" cy="140.8" r="0.51"/></g><g fill="#23263a"><path d="M35 139 Q38.7 135.5 42 139 Q38.7 141 35 139 Z"/><ellipse cx="94.5" cy="146.5" rx="1.8" ry="1.2"/><ellipse cx="142" cy="131" rx="1.2" ry="1"/></g><g><path d="M108 82.5 L113 81" stroke="#3b3f52" stroke-width="0.8"/><path d="M91.5 90.8 L99 82.5" stroke="#3a3840" stroke-width="1.1" stroke-linecap="round"/><ellipse cx="104.2" cy="78.8" rx="4.8" ry="5.8" fill="#8c8286" transform="rotate(28 104.2 78.8)"/><ellipse cx="102.6" cy="81.8" rx="2.4" ry="2.2" fill="#cfd2de" opacity="0.6"/><ellipse cx="106.6" cy="73.8" rx="2.1" ry="1.8" fill="#1f1d24"/><ellipse cx="83.8" cy="104.2" rx="4.7" ry="5.9" fill="#c0583d"/><ellipse cx="83.6" cy="98.8" rx="2.1" ry="1.7" fill="#1c1a20"/><path d="M88 110 L89 118.6" stroke="#25232a" stroke-width="1.5" stroke-linecap="round"/><ellipse cx="113.7" cy="99.6" rx="4.4" ry="5.7" fill="#8a7f82"/><ellipse cx="114.4" cy="94.2" rx="2" ry="1.7" fill="#1d1b21"/><path d="M116.5 104 L119.6 107.8" stroke="#25232a" stroke-width="1.3" stroke-linecap="round"/></g></symbol></defs></svg>
<svg class="b" style="left:508px;top:1120.00px" width="200" height="200" viewBox="0 0 200 200"><use href="#thumb"/></svg>
<div class="t" style="left:508.00px;top:1329.00px;font-size:21.5px;font-weight:400;color:#e3e0de;letter-spacing:-0.6px;-webkit-text-stroke:0.45px #e3e0de;">_DSC8905.ARW</div>
<svg class="b" style="left:725.7px;top:1120.00px" width="200" height="200" viewBox="0 0 200 200"><use href="#thumb"/></svg>
<div class="t" style="left:725.70px;top:1329.00px;font-size:21.5px;font-weight:400;color:#e3e0de;letter-spacing:-0.6px;-webkit-text-stroke:0.45px #e3e0de;">_DSC8906.ARW</div>
<svg class="b" style="left:943.3px;top:1120.00px" width="200" height="200" viewBox="0 0 200 200"><use href="#thumb"/></svg>
<div class="t" style="left:943.30px;top:1329.00px;font-size:21.5px;font-weight:400;color:#e3e0de;letter-spacing:-0.6px;-webkit-text-stroke:0.45px #e3e0de;">_DSC8907.ARW</div>
<svg class="b" style="left:1161px;top:1120.00px" width="200" height="200" viewBox="0 0 200 200"><use href="#thumb"/></svg>
<div class="t" style="left:1161.00px;top:1329.00px;font-size:21.5px;font-weight:400;color:#e3e0de;letter-spacing:-0.6px;-webkit-text-stroke:0.45px #e3e0de;">_DSC8909.ARW</div>
<svg class="b" style="left:508px;top:1366.20px" width="200" height="200" viewBox="0 0 200 200"><use href="#thumb"/></svg>
<div class="t" style="left:508.00px;top:1575.20px;font-size:21.5px;font-weight:400;color:#e3e0de;letter-spacing:-0.6px;-webkit-text-stroke:0.45px #e3e0de;">_DSC8910.ARW</div>
<svg class="b" style="left:725.7px;top:1366.20px" width="200" height="200" viewBox="0 0 200 200"><use href="#thumb"/></svg>
<div class="t" style="left:725.70px;top:1575.20px;font-size:21.5px;font-weight:400;color:#e3e0de;letter-spacing:-0.6px;-webkit-text-stroke:0.45px #e3e0de;">_DSC8912.ARW</div>
<svg class="b" style="left:943.3px;top:1366.20px" width="200" height="200" viewBox="0 0 200 200"><use href="#thumb"/></svg>
<div class="t" style="left:943.30px;top:1575.20px;font-size:21.5px;font-weight:400;color:#e3e0de;letter-spacing:-0.6px;-webkit-text-stroke:0.45px #e3e0de;">_DSC8913.ARW</div>
<svg class="b" style="left:1161px;top:1366.20px" width="200" height="200" viewBox="0 0 200 200"><use href="#thumb"/></svg>
<div class="t" style="left:1161.00px;top:1575.20px;font-size:21.5px;font-weight:400;color:#e3e0de;letter-spacing:-0.6px;-webkit-text-stroke:0.45px #e3e0de;">_DSC8918.ARW</div>
<svg class="b" style="left:2178px;top:866px" width="70" height="84" viewBox="0 0 70 84"><path d="M15 6.6 H35 L61.4 31.5 V69.6 Q61.4 77.4 53.6 77.4 H15.4 Q7.6 77.4 7.6 69.6 V14.4 Q7.6 6.6 15 6.6 Z" fill="none" stroke="#625c5a" stroke-width="5.2" stroke-linejoin="round"/><path d="M34.5 7 V26.8 Q34.5 33.4 41 33.4 H61" fill="none" stroke="#625c5a" stroke-width="5.2" stroke-linejoin="round"/><g stroke="#625c5a" stroke-width="4.4" stroke-linecap="round"><line x1="20.8" y1="49.2" x2="47.4" y2="49.2"/><line x1="20.8" y1="61.3" x2="47.4" y2="61.3"/></g></svg>
<div class="t" style="left:1612.60px;width:1200px;text-align:center;top:1001.28px;font-size:52px;font-weight:700;color:#a3a09d;letter-spacing:-0.7px;-webkit-text-stroke:0.7px #a3a09d;">No Selection</div>
<div class="t" style="left:1612.60px;width:1200px;text-align:center;top:1083.55px;font-size:27.7px;font-weight:400;color:#a6a3a1;letter-spacing:0px;-webkit-text-stroke:0.3px #a6a3a1;">Select a file to view its properties.</div>
</body></html>
